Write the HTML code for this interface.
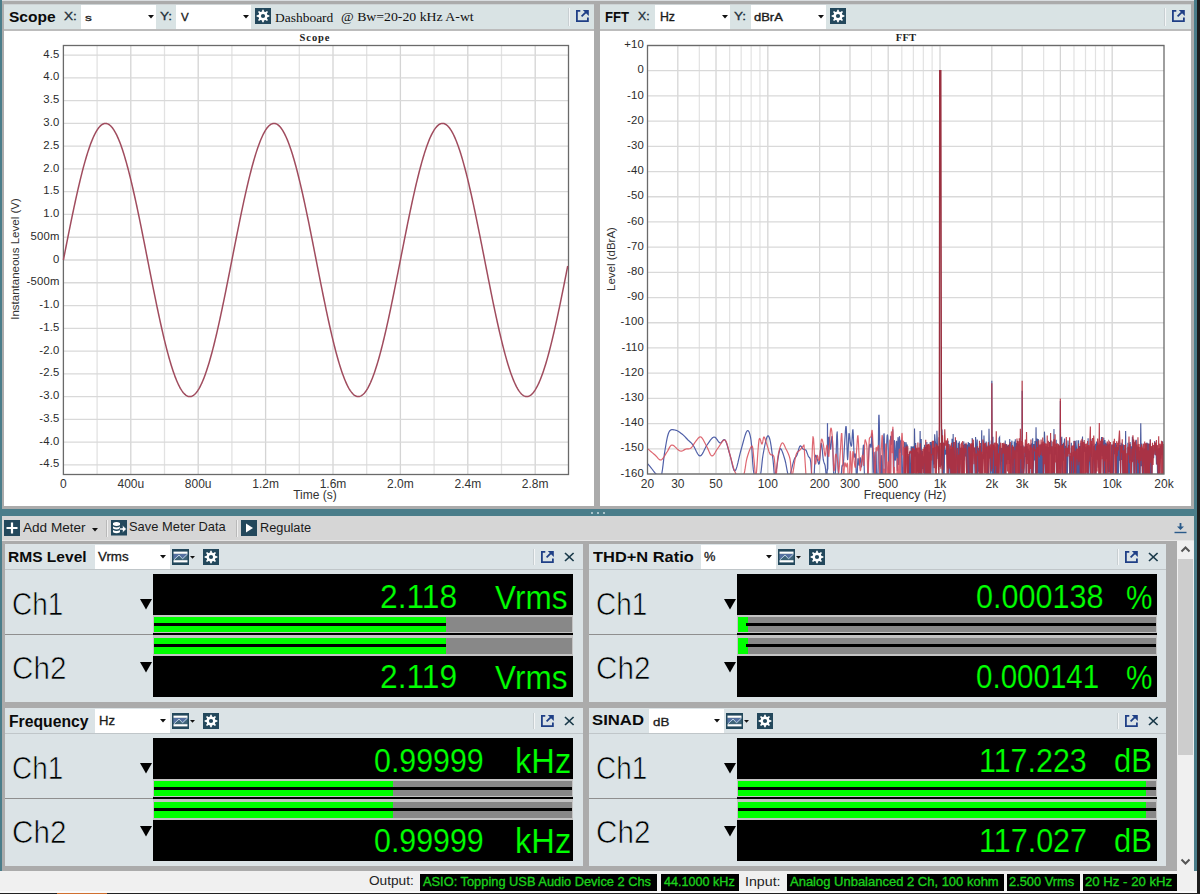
<!DOCTYPE html><html><head><meta charset="utf-8"><style>html,body{margin:0;padding:0;}body{width:1200px;height:894px;position:relative;overflow:hidden;background:#ababab;font-family:"Liberation Sans",sans-serif;}</style></head><body>
<div style="position:absolute;left:0px;top:0px;width:1200px;height:894px;background:#ababab;"></div>
<div style="position:absolute;left:2px;top:0px;width:1192px;height:1px;background:#d9dde0;"></div>
<div style="position:absolute;left:0px;top:0px;width:2px;height:871px;background:#4a7d8a;"></div>
<div style="position:absolute;left:1194px;top:0px;width:3px;height:871px;background:#4a7d8a;"></div>
<div style="position:absolute;left:1197px;top:0px;width:3px;height:894px;background:#1c1c1c;"></div>
<div style="position:absolute;left:4px;top:4px;width:590px;height:1px;background:#cdd3d5;"></div>
<div style="position:absolute;left:4px;top:5px;width:590px;height:24px;background:#d9e3e4;"></div>
<div style="position:absolute;left:4px;top:29px;width:590px;height:2px;background:#bcbcbc;"></div>
<div style="position:absolute;left:4px;top:31px;width:590px;height:475px;background:#fff;"></div>
<div style="position:absolute;left:8.83px;top:9.19px;font-family:'Liberation Sans', sans-serif;font-size:15.07px;line-height:1;color:#0a0a0a;font-weight:bold;white-space:nowrap;transform-origin:0 0;transform:scaleX(1.0313);">Scope</div>
<div style="position:absolute;left:63.79px;top:10.59px;font-family:'Liberation Sans', sans-serif;font-size:11.30px;line-height:1;color:#1e2e38;font-weight:normal;white-space:nowrap;transform-origin:0 0;transform:scaleX(1.2083);-webkit-text-stroke:0.3px #1e2e38;">X:</div>
<div style="position:absolute;left:81px;top:5px;width:75px;height:24px;background:#fff;"></div>
<div style="position:absolute;left:84.99px;top:12.76px;font-family:'Liberation Sans', sans-serif;font-size:9.82px;line-height:1;color:#1a1a1a;font-weight:normal;white-space:nowrap;transform-origin:0 0;transform:scaleX(1.3857);-webkit-text-stroke:0.35px #1a1a1a;">s</div>
<svg style="position:absolute;left:148px;top:15px" width="6" height="4" viewBox="0 0 6 4"><path d="M0 0 H6 L3 3.5 Z" fill="#111"/></svg>
<div style="position:absolute;left:159.59px;top:10.59px;font-family:'Liberation Sans', sans-serif;font-size:11.30px;line-height:1;color:#1e2e38;font-weight:normal;white-space:nowrap;transform-origin:0 0;transform:scaleX(1.2063);-webkit-text-stroke:0.3px #1e2e38;">Y:</div>
<div style="position:absolute;left:176px;top:5px;width:75px;height:24px;background:#fff;"></div>
<div style="position:absolute;left:181.13px;top:11.54px;font-family:'Liberation Sans', sans-serif;font-size:11.59px;line-height:1;color:#1a1a1a;font-weight:normal;white-space:nowrap;transform-origin:0 0;transform:scaleX(0.9952);-webkit-text-stroke:0.35px #1a1a1a;">V</div>
<svg style="position:absolute;left:243px;top:15px" width="6" height="4" viewBox="0 0 6 4"><path d="M0 0 H6 L3 3.5 Z" fill="#111"/></svg>
<svg style="position:absolute;left:255px;top:8px" width="16" height="16" viewBox="0 0 16 16"><rect width="16" height="16" fill="#23485c"/><polygon points="6.28,3.84 7.10,3.39 7.22,1.65 8.78,1.65 8.90,3.39 9.72,3.84 10.63,4.10 11.94,2.96 13.04,4.06 11.90,5.37 12.16,6.28 12.61,7.10 14.35,7.22 14.35,8.78 12.61,8.90 12.16,9.72 11.90,10.63 13.04,11.94 11.94,13.04 10.63,11.90 9.72,12.16 8.90,12.61 8.78,14.35 7.22,14.35 7.10,12.61 6.28,12.16 5.37,11.90 4.06,13.04 2.96,11.94 4.10,10.63 3.84,9.72 3.39,8.90 1.65,8.78 1.65,7.22 3.39,7.10 3.84,6.28 4.10,5.37 2.96,4.06 4.06,2.96 5.37,4.10" fill="#fff"/><circle cx="8.0" cy="8.0" r="2.1" fill="#23485c"/></svg>
<div style="position:absolute;left:569px;top:8px;width:1px;height:18px;background:#f4f6f7;"></div>
<div style="position:absolute;left:568px;top:8px;width:1px;height:18px;background:#c8cfd2;"></div>
<svg style="position:absolute;left:575.5px;top:10.1px" width="13.0" height="12.0" viewBox="0 0 13 12"><path d="M4.3 0.9 H0.9 V11.1 H11.9 V7.6" fill="none" stroke="#1f3f86" stroke-width="1.8"/><path d="M5.6 6.4 L10.2 1.8" stroke="#1f3f86" stroke-width="1.8"/><path d="M6.8 0 H12.8 V6 Z" fill="#1f3f86"/></svg>
<div style="position:absolute;left:600px;top:4px;width:591px;height:1px;background:#cdd3d5;"></div>
<div style="position:absolute;left:600px;top:5px;width:591px;height:24px;background:#d9e3e4;"></div>
<div style="position:absolute;left:600px;top:29px;width:591px;height:2px;background:#bcbcbc;"></div>
<div style="position:absolute;left:600px;top:31px;width:591px;height:475px;background:#fff;"></div>
<div style="position:absolute;left:604.88px;top:9.19px;font-family:'Liberation Sans', sans-serif;font-size:15.07px;line-height:1;color:#0a0a0a;font-weight:bold;white-space:nowrap;transform-origin:0 0;transform:scaleX(0.8701);">FFT</div>
<div style="position:absolute;left:638.38px;top:10.59px;font-family:'Liberation Sans', sans-serif;font-size:11.30px;line-height:1;color:#1e2e38;font-weight:normal;white-space:nowrap;transform-origin:0 0;transform:scaleX(1.0788);-webkit-text-stroke:0.3px #1e2e38;">X:</div>
<div style="position:absolute;left:655px;top:5px;width:75px;height:24px;background:#fff;"></div>
<div style="position:absolute;left:659.82px;top:11.21px;font-family:'Liberation Sans', sans-serif;font-size:12.10px;line-height:1;color:#1a1a1a;font-weight:normal;white-space:nowrap;transform-origin:0 0;transform:scaleX(1.0159);-webkit-text-stroke:0.35px #1a1a1a;">Hz</div>
<svg style="position:absolute;left:722px;top:15px" width="6" height="4" viewBox="0 0 6 4"><path d="M0 0 H6 L3 3.5 Z" fill="#111"/></svg>
<div style="position:absolute;left:734.09px;top:10.59px;font-family:'Liberation Sans', sans-serif;font-size:11.30px;line-height:1;color:#1e2e38;font-weight:normal;white-space:nowrap;transform-origin:0 0;transform:scaleX(1.2063);-webkit-text-stroke:0.3px #1e2e38;">Y:</div>
<div style="position:absolute;left:751px;top:5px;width:75px;height:24px;background:#fff;"></div>
<div style="position:absolute;left:754.48px;top:11.80px;font-family:'Liberation Sans', sans-serif;font-size:11.28px;line-height:1;color:#1a1a1a;font-weight:normal;white-space:nowrap;transform-origin:0 0;transform:scaleX(1.1505);-webkit-text-stroke:0.35px #1a1a1a;">dBrA</div>
<svg style="position:absolute;left:818px;top:15px" width="6" height="4" viewBox="0 0 6 4"><path d="M0 0 H6 L3 3.5 Z" fill="#111"/></svg>
<svg style="position:absolute;left:830px;top:8px" width="16" height="16" viewBox="0 0 16 16"><rect width="16" height="16" fill="#23485c"/><polygon points="6.28,3.84 7.10,3.39 7.22,1.65 8.78,1.65 8.90,3.39 9.72,3.84 10.63,4.10 11.94,2.96 13.04,4.06 11.90,5.37 12.16,6.28 12.61,7.10 14.35,7.22 14.35,8.78 12.61,8.90 12.16,9.72 11.90,10.63 13.04,11.94 11.94,13.04 10.63,11.90 9.72,12.16 8.90,12.61 8.78,14.35 7.22,14.35 7.10,12.61 6.28,12.16 5.37,11.90 4.06,13.04 2.96,11.94 4.10,10.63 3.84,9.72 3.39,8.90 1.65,8.78 1.65,7.22 3.39,7.10 3.84,6.28 4.10,5.37 2.96,4.06 4.06,2.96 5.37,4.10" fill="#fff"/><circle cx="8.0" cy="8.0" r="2.1" fill="#23485c"/></svg>
<div style="position:absolute;left:1165px;top:8px;width:1px;height:18px;background:#f4f6f7;"></div>
<div style="position:absolute;left:1164px;top:8px;width:1px;height:18px;background:#c8cfd2;"></div>
<svg style="position:absolute;left:1171.8px;top:10.1px" width="13.0" height="12.0" viewBox="0 0 13 12"><path d="M4.3 0.9 H0.9 V11.1 H11.9 V7.6" fill="none" stroke="#1f3f86" stroke-width="1.8"/><path d="M5.6 6.4 L10.2 1.8" stroke="#1f3f86" stroke-width="1.8"/><path d="M6.8 0 H12.8 V6 Z" fill="#1f3f86"/></svg>
<div style="position:absolute;left:274.85px;top:11.92px;font-family:'Liberation Serif', serif;font-size:12.00px;line-height:1;color:#111;font-weight:normal;white-space:nowrap;transform-origin:0 0;transform:scaleX(1.1218);">Dashboard</div>
<div style="position:absolute;left:341.06px;top:11.27px;font-family:'Liberation Serif', serif;font-size:12.92px;line-height:1;color:#111;font-weight:normal;white-space:nowrap;transform-origin:0 0;transform:scaleX(1.0685);">@ Bw=20-20 kHz A-wt</div>
<div style="position:absolute;left:2px;top:506px;width:1192px;height:4px;background:#ababab;"></div>
<div style="position:absolute;left:2px;top:509px;width:1192px;height:7px;background:#4a7d8a;"></div>
<div style="position:absolute;left:590.5px;top:512px;width:2px;height:2px;background:#a9c3ca;"></div>
<div style="position:absolute;left:596.7px;top:512px;width:2px;height:2px;background:#a9c3ca;"></div>
<div style="position:absolute;left:603.3px;top:512px;width:2px;height:2px;background:#a9c3ca;"></div>
<div style="position:absolute;left:2px;top:516px;width:1192px;height:25px;background:#d6d6d6;"></div>
<div style="position:absolute;left:2px;top:540px;width:1192px;height:1px;background:#e6e6e6;"></div>
<svg style="position:absolute;left:4px;top:520px" width="16" height="16" viewBox="0 0 16 16"><rect width="16" height="16" fill="#23485c"/><path d="M8 2.5 V13.5 M2.5 8 H13.5" stroke="#fff" stroke-width="2.2"/></svg>
<div style="position:absolute;left:23.30px;top:520.98px;font-family:'Liberation Sans', sans-serif;font-size:13.26px;line-height:1;color:#1a1a1a;font-weight:normal;white-space:nowrap;transform-origin:0 0;transform:scaleX(1.0246);">Add Meter</div>
<svg style="position:absolute;left:92px;top:528px" width="6" height="4" viewBox="0 0 6 4"><path d="M0 0 H6 L3 3.5 Z" fill="#111"/></svg>
<div style="position:absolute;left:106px;top:520px;width:1px;height:17px;background:#b9b9b9;"></div>
<div style="position:absolute;left:107px;top:520px;width:1px;height:17px;background:#f0f0f0;"></div>
<svg style="position:absolute;left:110.8px;top:520.2px" width="16" height="15.5" viewBox="0 0 16 15.5"><rect width="16" height="15.5" fill="#23485c"/><path d="M2 3 Q5.5 0.8 9 3 V5 Q5.5 7 2 5 Z M2 6.4 Q5.5 8.4 9 6.4 V8.6 Q5.5 10.6 2 8.6 Z M2 10 Q5.5 12 9 10 V12.2 Q5.5 14.2 2 12.2 Z" fill="#fff"/><path d="M8.5 8 H11.5 V5.2 L15.5 9 L11.5 12.8 V10 H8.5 Z" fill="#fff" stroke="#23485c" stroke-width="0.6"/></svg>
<div style="position:absolute;left:129.06px;top:521.36px;font-family:'Liberation Sans', sans-serif;font-size:12.96px;line-height:1;color:#1a1a1a;font-weight:normal;white-space:nowrap;transform-origin:0 0;transform:scaleX(0.9955);">Save Meter Data</div>
<div style="position:absolute;left:236px;top:520px;width:1px;height:17px;background:#b9b9b9;"></div>
<div style="position:absolute;left:237px;top:520px;width:1px;height:17px;background:#f0f0f0;"></div>
<svg style="position:absolute;left:241px;top:520px" width="16" height="16" viewBox="0 0 16 16"><rect width="16" height="16" fill="#23485c"/><path d="M5 3.5 L12 8 L5 12.5 Z" fill="#fff"/></svg>
<div style="position:absolute;left:260.28px;top:521.14px;font-family:'Liberation Sans', sans-serif;font-size:13.53px;line-height:1;color:#1a1a1a;font-weight:normal;white-space:nowrap;transform-origin:0 0;transform:scaleX(0.9430);">Regulate</div>
<svg style="position:absolute;left:1173px;top:522px" width="15" height="12" viewBox="0 0 15 12"><path d="M7.5 1 V5" stroke="#2a5a8a" stroke-width="1.8"/><path d="M4 4.5 H11 L7.5 8 Z" fill="#2a5a8a"/><path d="M1.5 10.5 H13.5" stroke="#2a5a8a" stroke-width="1.4"/></svg>
<div style="position:absolute;left:2px;top:541px;width:1175px;height:330px;background:#ababab;"></div>
<div style="position:absolute;left:1177px;top:541px;width:17px;height:330px;background:#f0f0f0;"></div>
<div style="position:absolute;left:1178px;top:559px;width:15px;height:196px;background:#cdcdcd;"></div>
<svg style="position:absolute;left:1180px;top:545px" width="11" height="8" viewBox="0 0 11 8"><path d="M1.5 6.5 L5.5 2.5 L9.5 6.5" fill="none" stroke="#555" stroke-width="2"/></svg>
<svg style="position:absolute;left:1180px;top:858px" width="11" height="8" viewBox="0 0 11 8"><path d="M1.5 1.5 L5.5 5.5 L9.5 1.5" fill="none" stroke="#555" stroke-width="2"/></svg>
<div style="position:absolute;left:5px;top:544px;width:578px;height:158px;background:#dbe3e6;"></div>
<div style="position:absolute;left:5px;top:569px;width:578px;height:1px;background:#c0c6c9;"></div>
<div style="position:absolute;left:8.41px;top:549.91px;font-family:'Liberation Sans', sans-serif;font-size:14.05px;line-height:1;color:#0a0a0a;font-weight:bold;white-space:nowrap;transform-origin:0 0;transform:scaleX(1.1064);">RMS Level</div>
<div style="position:absolute;left:95px;top:545px;width:75px;height:24px;background:#fff;"></div>
<div style="position:absolute;left:97.87px;top:551.03px;font-family:'Liberation Sans', sans-serif;font-size:12.29px;line-height:1;color:#1a1a1a;font-weight:normal;white-space:nowrap;transform-origin:0 0;transform:scaleX(1.0853);-webkit-text-stroke:0.3px #1a1a1a;">Vrms</div>
<svg style="position:absolute;left:160px;top:555px" width="6" height="4" viewBox="0 0 6 4"><path d="M0 0 H6 L3 3.5 Z" fill="#111"/></svg>
<svg style="position:absolute;left:172px;top:549px" width="24" height="16" viewBox="0 0 24 16"><rect x="0" y="0" width="17" height="16" fill="#23485c"/><rect x="1.5" y="5" width="14" height="6.5" fill="#3f6478"/><path d="M1.5 5 H15.5 V6 L11 10 L8 7 L1.5 10.5 Z" fill="#5570a0"/><rect x="1.5" y="2.6" width="14" height="2.2" fill="#fff"/><rect x="1.5" y="11.2" width="14" height="2.2" fill="#fff"/><polyline points="2,10.8 7,6 10.5,9.8 15.5,5" fill="none" stroke="#b8d0dc" stroke-width="1"/><path d="M18 7 L23 7 L20.5 9.8 Z" fill="#111"/></svg>
<svg style="position:absolute;left:203px;top:549px" width="16" height="16" viewBox="0 0 16 16"><rect width="16" height="16" fill="#23485c"/><polygon points="6.28,3.84 7.10,3.39 7.22,1.65 8.78,1.65 8.90,3.39 9.72,3.84 10.63,4.10 11.94,2.96 13.04,4.06 11.90,5.37 12.16,6.28 12.61,7.10 14.35,7.22 14.35,8.78 12.61,8.90 12.16,9.72 11.90,10.63 13.04,11.94 11.94,13.04 10.63,11.90 9.72,12.16 8.90,12.61 8.78,14.35 7.22,14.35 7.10,12.61 6.28,12.16 5.37,11.90 4.06,13.04 2.96,11.94 4.10,10.63 3.84,9.72 3.39,8.90 1.65,8.78 1.65,7.22 3.39,7.10 3.84,6.28 4.10,5.37 2.96,4.06 4.06,2.96 5.37,4.10" fill="#fff"/><circle cx="8.0" cy="8.0" r="2.1" fill="#23485c"/></svg>
<svg style="position:absolute;left:540.5px;top:550.8px" width="13.0" height="12.0" viewBox="0 0 13 12"><path d="M4.3 0.9 H0.9 V11.1 H11.9 V7.6" fill="none" stroke="#1f3f86" stroke-width="1.8"/><path d="M5.6 6.4 L10.2 1.8" stroke="#1f3f86" stroke-width="1.8"/><path d="M6.8 0 H12.8 V6 Z" fill="#1f3f86"/></svg>
<svg style="position:absolute;left:564.4px;top:551.5px" width="11" height="10" viewBox="0 0 11 10"><path d="M1 1 L9.6 9 M9.6 1 L1 9" stroke="#1a3a4a" stroke-width="1.7"/></svg>
<div style="position:absolute;left:533px;top:549px;width:1px;height:16px;background:#c8cfd2;"></div>
<div style="position:absolute;left:534px;top:549px;width:1px;height:16px;background:#f4f6f7;"></div>
<div style="position:absolute;left:153px;top:574px;width:420px;height:123px;background:#000;"></div>
<div style="position:absolute;left:5px;top:634px;width:148px;height:1px;background:#8f8f8f;"></div>
<div style="position:absolute;left:12.30px;top:588.89px;font-family:'Liberation Sans', sans-serif;font-size:31.76px;line-height:1;color:#000;font-weight:normal;white-space:nowrap;transform-origin:0 0;transform:scaleX(0.8792);-webkit-text-stroke:0.7px #dbe3e6;">Ch1</div>
<div style="position:absolute;left:12.22px;top:652.69px;font-family:'Liberation Sans', sans-serif;font-size:31.76px;line-height:1;color:#000;font-weight:normal;white-space:nowrap;transform-origin:0 0;transform:scaleX(0.9338);-webkit-text-stroke:0.7px #dbe3e6;">Ch2</div>
<svg style="position:absolute;left:140px;top:599px" width="12" height="11" viewBox="0 0 12 11"><path d="M0 0 H12 L6 10.5 Z" fill="#000"/></svg>
<svg style="position:absolute;left:140px;top:662px" width="12" height="11" viewBox="0 0 12 11"><path d="M0 0 H12 L6 10.5 Z" fill="#000"/></svg>
<div style="position:absolute;left:153px;top:615px;width:420px;height:18px;background:#c4c4c4;"></div>
<div style="position:absolute;left:154px;top:617px;width:418px;height:15px;background:#888;"></div>
<div style="position:absolute;left:154px;top:617px;width:292px;height:6px;background:#00ff00;"></div>
<div style="position:absolute;left:154px;top:623px;width:292px;height:3px;background:#000;"></div>
<div style="position:absolute;left:154px;top:626px;width:292px;height:6px;background:#00ff00;"></div>
<div style="position:absolute;left:153px;top:635px;width:420px;height:21px;background:#c4c4c4;"></div>
<div style="position:absolute;left:154px;top:638px;width:418px;height:16px;background:#888;"></div>
<div style="position:absolute;left:154px;top:638px;width:292px;height:6px;background:#00ff00;"></div>
<div style="position:absolute;left:154px;top:644px;width:292px;height:3px;background:#000;"></div>
<div style="position:absolute;left:154px;top:647px;width:292px;height:7px;background:#00ff00;"></div>
<div style="position:absolute;left:153px;top:633px;width:420px;height:2px;background:#000;"></div>
<div style="position:absolute;left:380.41px;top:581.12px;font-family:'Liberation Sans', sans-serif;font-size:32.54px;line-height:1;color:#00ff00;font-weight:normal;white-space:nowrap;transform-origin:0 0;transform:scaleX(0.9762);-webkit-text-stroke:0.2px #000;">2.118</div>
<div style="position:absolute;left:494.68px;top:580.72px;font-family:'Liberation Sans', sans-serif;font-size:33.00px;line-height:1;color:#00ff00;font-weight:normal;white-space:nowrap;transform-origin:0 0;transform:scaleX(0.9562);-webkit-text-stroke:0.2px #000;">Vrms</div>
<div style="position:absolute;left:380.41px;top:661.12px;font-family:'Liberation Sans', sans-serif;font-size:32.54px;line-height:1;color:#00ff00;font-weight:normal;white-space:nowrap;transform-origin:0 0;transform:scaleX(0.9762);-webkit-text-stroke:0.2px #000;">2.119</div>
<div style="position:absolute;left:494.68px;top:660.72px;font-family:'Liberation Sans', sans-serif;font-size:33.00px;line-height:1;color:#00ff00;font-weight:normal;white-space:nowrap;transform-origin:0 0;transform:scaleX(0.9562);-webkit-text-stroke:0.2px #000;">Vrms</div>
<div style="position:absolute;left:589px;top:544px;width:577px;height:158px;background:#dbe3e6;"></div>
<div style="position:absolute;left:589px;top:569px;width:577px;height:1px;background:#c0c6c9;"></div>
<div style="position:absolute;left:593.14px;top:549.91px;font-family:'Liberation Sans', sans-serif;font-size:14.05px;line-height:1;color:#0a0a0a;font-weight:bold;white-space:nowrap;transform-origin:0 0;transform:scaleX(1.1684);">THD+N Ratio</div>
<div style="position:absolute;left:701px;top:545px;width:75px;height:24px;background:#fff;"></div>
<div style="position:absolute;left:704.29px;top:551.03px;font-family:'Liberation Sans', sans-serif;font-size:12.29px;line-height:1;color:#1a1a1a;font-weight:normal;white-space:nowrap;transform-origin:0 0;transform:scaleX(1.0451);-webkit-text-stroke:0.3px #1a1a1a;">%</div>
<svg style="position:absolute;left:766px;top:555px" width="6" height="4" viewBox="0 0 6 4"><path d="M0 0 H6 L3 3.5 Z" fill="#111"/></svg>
<svg style="position:absolute;left:778px;top:549px" width="24" height="16" viewBox="0 0 24 16"><rect x="0" y="0" width="17" height="16" fill="#23485c"/><rect x="1.5" y="5" width="14" height="6.5" fill="#3f6478"/><path d="M1.5 5 H15.5 V6 L11 10 L8 7 L1.5 10.5 Z" fill="#5570a0"/><rect x="1.5" y="2.6" width="14" height="2.2" fill="#fff"/><rect x="1.5" y="11.2" width="14" height="2.2" fill="#fff"/><polyline points="2,10.8 7,6 10.5,9.8 15.5,5" fill="none" stroke="#b8d0dc" stroke-width="1"/><path d="M18 7 L23 7 L20.5 9.8 Z" fill="#111"/></svg>
<svg style="position:absolute;left:809px;top:549px" width="16" height="16" viewBox="0 0 16 16"><rect width="16" height="16" fill="#23485c"/><polygon points="6.28,3.84 7.10,3.39 7.22,1.65 8.78,1.65 8.90,3.39 9.72,3.84 10.63,4.10 11.94,2.96 13.04,4.06 11.90,5.37 12.16,6.28 12.61,7.10 14.35,7.22 14.35,8.78 12.61,8.90 12.16,9.72 11.90,10.63 13.04,11.94 11.94,13.04 10.63,11.90 9.72,12.16 8.90,12.61 8.78,14.35 7.22,14.35 7.10,12.61 6.28,12.16 5.37,11.90 4.06,13.04 2.96,11.94 4.10,10.63 3.84,9.72 3.39,8.90 1.65,8.78 1.65,7.22 3.39,7.10 3.84,6.28 4.10,5.37 2.96,4.06 4.06,2.96 5.37,4.10" fill="#fff"/><circle cx="8.0" cy="8.0" r="2.1" fill="#23485c"/></svg>
<svg style="position:absolute;left:1124.5px;top:550.8px" width="13.0" height="12.0" viewBox="0 0 13 12"><path d="M4.3 0.9 H0.9 V11.1 H11.9 V7.6" fill="none" stroke="#1f3f86" stroke-width="1.8"/><path d="M5.6 6.4 L10.2 1.8" stroke="#1f3f86" stroke-width="1.8"/><path d="M6.8 0 H12.8 V6 Z" fill="#1f3f86"/></svg>
<svg style="position:absolute;left:1148.4px;top:551.5px" width="11" height="10" viewBox="0 0 11 10"><path d="M1 1 L9.6 9 M9.6 1 L1 9" stroke="#1a3a4a" stroke-width="1.7"/></svg>
<div style="position:absolute;left:1117px;top:549px;width:1px;height:16px;background:#c8cfd2;"></div>
<div style="position:absolute;left:1118px;top:549px;width:1px;height:16px;background:#f4f6f7;"></div>
<div style="position:absolute;left:737px;top:574px;width:420px;height:123px;background:#000;"></div>
<div style="position:absolute;left:589px;top:634px;width:148px;height:1px;background:#8f8f8f;"></div>
<div style="position:absolute;left:596.30px;top:588.89px;font-family:'Liberation Sans', sans-serif;font-size:31.76px;line-height:1;color:#000;font-weight:normal;white-space:nowrap;transform-origin:0 0;transform:scaleX(0.8792);-webkit-text-stroke:0.7px #dbe3e6;">Ch1</div>
<div style="position:absolute;left:596.22px;top:652.69px;font-family:'Liberation Sans', sans-serif;font-size:31.76px;line-height:1;color:#000;font-weight:normal;white-space:nowrap;transform-origin:0 0;transform:scaleX(0.9338);-webkit-text-stroke:0.7px #dbe3e6;">Ch2</div>
<svg style="position:absolute;left:724px;top:599px" width="12" height="11" viewBox="0 0 12 11"><path d="M0 0 H12 L6 10.5 Z" fill="#000"/></svg>
<svg style="position:absolute;left:724px;top:662px" width="12" height="11" viewBox="0 0 12 11"><path d="M0 0 H12 L6 10.5 Z" fill="#000"/></svg>
<div style="position:absolute;left:737px;top:615px;width:420px;height:18px;background:#c4c4c4;"></div>
<div style="position:absolute;left:738px;top:617px;width:418px;height:15px;background:#888;"></div>
<div style="position:absolute;left:738px;top:617px;width:10px;height:6px;background:#00ff00;"></div>
<div style="position:absolute;left:738px;top:623px;width:10px;height:3px;background:#00ff00;"></div>
<div style="position:absolute;left:745.5px;top:623px;width:410.5px;height:3px;background:#000;"></div>
<div style="position:absolute;left:738px;top:626px;width:10px;height:6px;background:#00ff00;"></div>
<div style="position:absolute;left:737px;top:635px;width:420px;height:21px;background:#c4c4c4;"></div>
<div style="position:absolute;left:738px;top:638px;width:418px;height:16px;background:#888;"></div>
<div style="position:absolute;left:738px;top:638px;width:10px;height:6px;background:#00ff00;"></div>
<div style="position:absolute;left:738px;top:644px;width:10px;height:3px;background:#00ff00;"></div>
<div style="position:absolute;left:745.5px;top:644px;width:410.5px;height:3px;background:#000;"></div>
<div style="position:absolute;left:738px;top:647px;width:10px;height:7px;background:#00ff00;"></div>
<div style="position:absolute;left:737px;top:633px;width:420px;height:2px;background:#000;"></div>
<div style="position:absolute;left:976.28px;top:581.12px;font-family:'Liberation Sans', sans-serif;font-size:32.54px;line-height:1;color:#00ff00;font-weight:normal;white-space:nowrap;transform-origin:0 0;transform:scaleX(0.9394);-webkit-text-stroke:0.2px #000;">0.000138</div>
<div style="position:absolute;left:1125.51px;top:580.72px;font-family:'Liberation Sans', sans-serif;font-size:33.00px;line-height:1;color:#00ff00;font-weight:normal;white-space:nowrap;transform-origin:0 0;transform:scaleX(0.9016);-webkit-text-stroke:0.2px #000;">%</div>
<div style="position:absolute;left:976.32px;top:661.12px;font-family:'Liberation Sans', sans-serif;font-size:32.54px;line-height:1;color:#00ff00;font-weight:normal;white-space:nowrap;transform-origin:0 0;transform:scaleX(0.9078);-webkit-text-stroke:0.2px #000;">0.000141</div>
<div style="position:absolute;left:1125.51px;top:660.72px;font-family:'Liberation Sans', sans-serif;font-size:33.00px;line-height:1;color:#00ff00;font-weight:normal;white-space:nowrap;transform-origin:0 0;transform:scaleX(0.9016);-webkit-text-stroke:0.2px #000;">%</div>
<div style="position:absolute;left:5px;top:708px;width:578px;height:158px;background:#dbe3e6;"></div>
<div style="position:absolute;left:5px;top:733px;width:578px;height:1px;background:#c0c6c9;"></div>
<div style="position:absolute;left:8.80px;top:712.80px;font-family:'Liberation Sans', sans-serif;font-size:16.22px;line-height:1;color:#0a0a0a;font-weight:bold;white-space:nowrap;transform-origin:0 0;transform:scaleX(0.9705);">Frequency</div>
<div style="position:absolute;left:95px;top:709px;width:75px;height:24px;background:#fff;"></div>
<div style="position:absolute;left:98.65px;top:715.01px;font-family:'Liberation Sans', sans-serif;font-size:12.46px;line-height:1;color:#1a1a1a;font-weight:normal;white-space:nowrap;transform-origin:0 0;transform:scaleX(1.0526);-webkit-text-stroke:0.3px #1a1a1a;">Hz</div>
<svg style="position:absolute;left:160px;top:719px" width="6" height="4" viewBox="0 0 6 4"><path d="M0 0 H6 L3 3.5 Z" fill="#111"/></svg>
<svg style="position:absolute;left:172px;top:713px" width="24" height="16" viewBox="0 0 24 16"><rect x="0" y="0" width="17" height="16" fill="#23485c"/><rect x="1.5" y="5" width="14" height="6.5" fill="#3f6478"/><path d="M1.5 5 H15.5 V6 L11 10 L8 7 L1.5 10.5 Z" fill="#5570a0"/><rect x="1.5" y="2.6" width="14" height="2.2" fill="#fff"/><rect x="1.5" y="11.2" width="14" height="2.2" fill="#fff"/><polyline points="2,10.8 7,6 10.5,9.8 15.5,5" fill="none" stroke="#b8d0dc" stroke-width="1"/><path d="M18 7 L23 7 L20.5 9.8 Z" fill="#111"/></svg>
<svg style="position:absolute;left:203px;top:713px" width="16" height="16" viewBox="0 0 16 16"><rect width="16" height="16" fill="#23485c"/><polygon points="6.28,3.84 7.10,3.39 7.22,1.65 8.78,1.65 8.90,3.39 9.72,3.84 10.63,4.10 11.94,2.96 13.04,4.06 11.90,5.37 12.16,6.28 12.61,7.10 14.35,7.22 14.35,8.78 12.61,8.90 12.16,9.72 11.90,10.63 13.04,11.94 11.94,13.04 10.63,11.90 9.72,12.16 8.90,12.61 8.78,14.35 7.22,14.35 7.10,12.61 6.28,12.16 5.37,11.90 4.06,13.04 2.96,11.94 4.10,10.63 3.84,9.72 3.39,8.90 1.65,8.78 1.65,7.22 3.39,7.10 3.84,6.28 4.10,5.37 2.96,4.06 4.06,2.96 5.37,4.10" fill="#fff"/><circle cx="8.0" cy="8.0" r="2.1" fill="#23485c"/></svg>
<svg style="position:absolute;left:540.5px;top:714.8px" width="13.0" height="12.0" viewBox="0 0 13 12"><path d="M4.3 0.9 H0.9 V11.1 H11.9 V7.6" fill="none" stroke="#1f3f86" stroke-width="1.8"/><path d="M5.6 6.4 L10.2 1.8" stroke="#1f3f86" stroke-width="1.8"/><path d="M6.8 0 H12.8 V6 Z" fill="#1f3f86"/></svg>
<svg style="position:absolute;left:564.4px;top:715.5px" width="11" height="10" viewBox="0 0 11 10"><path d="M1 1 L9.6 9 M9.6 1 L1 9" stroke="#1a3a4a" stroke-width="1.7"/></svg>
<div style="position:absolute;left:533px;top:713px;width:1px;height:16px;background:#c8cfd2;"></div>
<div style="position:absolute;left:534px;top:713px;width:1px;height:16px;background:#f4f6f7;"></div>
<div style="position:absolute;left:153px;top:738px;width:420px;height:123px;background:#000;"></div>
<div style="position:absolute;left:5px;top:798px;width:148px;height:1px;background:#8f8f8f;"></div>
<div style="position:absolute;left:12.30px;top:752.89px;font-family:'Liberation Sans', sans-serif;font-size:31.76px;line-height:1;color:#000;font-weight:normal;white-space:nowrap;transform-origin:0 0;transform:scaleX(0.8792);-webkit-text-stroke:0.7px #dbe3e6;">Ch1</div>
<div style="position:absolute;left:12.22px;top:816.69px;font-family:'Liberation Sans', sans-serif;font-size:31.76px;line-height:1;color:#000;font-weight:normal;white-space:nowrap;transform-origin:0 0;transform:scaleX(0.9338);-webkit-text-stroke:0.7px #dbe3e6;">Ch2</div>
<svg style="position:absolute;left:140px;top:763px" width="12" height="11" viewBox="0 0 12 11"><path d="M0 0 H12 L6 10.5 Z" fill="#000"/></svg>
<svg style="position:absolute;left:140px;top:826px" width="12" height="11" viewBox="0 0 12 11"><path d="M0 0 H12 L6 10.5 Z" fill="#000"/></svg>
<div style="position:absolute;left:153px;top:779px;width:420px;height:18px;background:#c4c4c4;"></div>
<div style="position:absolute;left:154px;top:781px;width:418px;height:15px;background:#888;"></div>
<div style="position:absolute;left:154px;top:781px;width:239px;height:6px;background:#00ff00;"></div>
<div style="position:absolute;left:154px;top:787px;width:239px;height:3px;background:#000;"></div>
<div style="position:absolute;left:393px;top:787px;width:179px;height:3px;background:#000;"></div>
<div style="position:absolute;left:154px;top:790px;width:239px;height:6px;background:#00ff00;"></div>
<div style="position:absolute;left:153px;top:799px;width:420px;height:21px;background:#c4c4c4;"></div>
<div style="position:absolute;left:154px;top:802px;width:418px;height:16px;background:#888;"></div>
<div style="position:absolute;left:154px;top:802px;width:239px;height:6px;background:#00ff00;"></div>
<div style="position:absolute;left:154px;top:808px;width:239px;height:3px;background:#000;"></div>
<div style="position:absolute;left:393px;top:808px;width:179px;height:3px;background:#000;"></div>
<div style="position:absolute;left:154px;top:811px;width:239px;height:7px;background:#00ff00;"></div>
<div style="position:absolute;left:153px;top:797px;width:420px;height:2px;background:#000;"></div>
<div style="position:absolute;left:374.39px;top:745.12px;font-family:'Liberation Sans', sans-serif;font-size:32.54px;line-height:1;color:#00ff00;font-weight:normal;white-space:nowrap;transform-origin:0 0;transform:scaleX(0.9334);-webkit-text-stroke:0.2px #000;">0.99999</div>
<div style="position:absolute;left:514.52px;top:743.99px;font-family:'Liberation Sans', sans-serif;font-size:34.25px;line-height:1;color:#00ff00;font-weight:normal;white-space:nowrap;transform-origin:0 0;transform:scaleX(0.9526);-webkit-text-stroke:0.2px #000;">kHz</div>
<div style="position:absolute;left:374.39px;top:825.12px;font-family:'Liberation Sans', sans-serif;font-size:32.54px;line-height:1;color:#00ff00;font-weight:normal;white-space:nowrap;transform-origin:0 0;transform:scaleX(0.9334);-webkit-text-stroke:0.2px #000;">0.99999</div>
<div style="position:absolute;left:514.52px;top:823.99px;font-family:'Liberation Sans', sans-serif;font-size:34.25px;line-height:1;color:#00ff00;font-weight:normal;white-space:nowrap;transform-origin:0 0;transform:scaleX(0.9526);-webkit-text-stroke:0.2px #000;">kHz</div>
<div style="position:absolute;left:589px;top:708px;width:577px;height:158px;background:#dbe3e6;"></div>
<div style="position:absolute;left:589px;top:733px;width:577px;height:1px;background:#c0c6c9;"></div>
<div style="position:absolute;left:591.50px;top:713.40px;font-family:'Liberation Sans', sans-serif;font-size:14.65px;line-height:1;color:#0a0a0a;font-weight:bold;white-space:nowrap;transform-origin:0 0;transform:scaleX(1.1408);">SINAD</div>
<div style="position:absolute;left:649px;top:709px;width:75px;height:24px;background:#fff;"></div>
<div style="position:absolute;left:653.17px;top:715.61px;font-family:'Liberation Sans', sans-serif;font-size:11.62px;line-height:1;color:#1a1a1a;font-weight:normal;white-space:nowrap;transform-origin:0 0;transform:scaleX(1.1498);-webkit-text-stroke:0.3px #1a1a1a;">dB</div>
<svg style="position:absolute;left:714px;top:719px" width="6" height="4" viewBox="0 0 6 4"><path d="M0 0 H6 L3 3.5 Z" fill="#111"/></svg>
<svg style="position:absolute;left:726px;top:713px" width="24" height="16" viewBox="0 0 24 16"><rect x="0" y="0" width="17" height="16" fill="#23485c"/><rect x="1.5" y="5" width="14" height="6.5" fill="#3f6478"/><path d="M1.5 5 H15.5 V6 L11 10 L8 7 L1.5 10.5 Z" fill="#5570a0"/><rect x="1.5" y="2.6" width="14" height="2.2" fill="#fff"/><rect x="1.5" y="11.2" width="14" height="2.2" fill="#fff"/><polyline points="2,10.8 7,6 10.5,9.8 15.5,5" fill="none" stroke="#b8d0dc" stroke-width="1"/><path d="M18 7 L23 7 L20.5 9.8 Z" fill="#111"/></svg>
<svg style="position:absolute;left:757px;top:713px" width="16" height="16" viewBox="0 0 16 16"><rect width="16" height="16" fill="#23485c"/><polygon points="6.28,3.84 7.10,3.39 7.22,1.65 8.78,1.65 8.90,3.39 9.72,3.84 10.63,4.10 11.94,2.96 13.04,4.06 11.90,5.37 12.16,6.28 12.61,7.10 14.35,7.22 14.35,8.78 12.61,8.90 12.16,9.72 11.90,10.63 13.04,11.94 11.94,13.04 10.63,11.90 9.72,12.16 8.90,12.61 8.78,14.35 7.22,14.35 7.10,12.61 6.28,12.16 5.37,11.90 4.06,13.04 2.96,11.94 4.10,10.63 3.84,9.72 3.39,8.90 1.65,8.78 1.65,7.22 3.39,7.10 3.84,6.28 4.10,5.37 2.96,4.06 4.06,2.96 5.37,4.10" fill="#fff"/><circle cx="8.0" cy="8.0" r="2.1" fill="#23485c"/></svg>
<svg style="position:absolute;left:1124.5px;top:714.8px" width="13.0" height="12.0" viewBox="0 0 13 12"><path d="M4.3 0.9 H0.9 V11.1 H11.9 V7.6" fill="none" stroke="#1f3f86" stroke-width="1.8"/><path d="M5.6 6.4 L10.2 1.8" stroke="#1f3f86" stroke-width="1.8"/><path d="M6.8 0 H12.8 V6 Z" fill="#1f3f86"/></svg>
<svg style="position:absolute;left:1148.4px;top:715.5px" width="11" height="10" viewBox="0 0 11 10"><path d="M1 1 L9.6 9 M9.6 1 L1 9" stroke="#1a3a4a" stroke-width="1.7"/></svg>
<div style="position:absolute;left:1117px;top:713px;width:1px;height:16px;background:#c8cfd2;"></div>
<div style="position:absolute;left:1118px;top:713px;width:1px;height:16px;background:#f4f6f7;"></div>
<div style="position:absolute;left:737px;top:738px;width:420px;height:123px;background:#000;"></div>
<div style="position:absolute;left:589px;top:798px;width:148px;height:1px;background:#8f8f8f;"></div>
<div style="position:absolute;left:596.30px;top:752.89px;font-family:'Liberation Sans', sans-serif;font-size:31.76px;line-height:1;color:#000;font-weight:normal;white-space:nowrap;transform-origin:0 0;transform:scaleX(0.8792);-webkit-text-stroke:0.7px #dbe3e6;">Ch1</div>
<div style="position:absolute;left:596.22px;top:816.69px;font-family:'Liberation Sans', sans-serif;font-size:31.76px;line-height:1;color:#000;font-weight:normal;white-space:nowrap;transform-origin:0 0;transform:scaleX(0.9338);-webkit-text-stroke:0.7px #dbe3e6;">Ch2</div>
<svg style="position:absolute;left:724px;top:763px" width="12" height="11" viewBox="0 0 12 11"><path d="M0 0 H12 L6 10.5 Z" fill="#000"/></svg>
<svg style="position:absolute;left:724px;top:826px" width="12" height="11" viewBox="0 0 12 11"><path d="M0 0 H12 L6 10.5 Z" fill="#000"/></svg>
<div style="position:absolute;left:737px;top:779px;width:420px;height:18px;background:#c4c4c4;"></div>
<div style="position:absolute;left:738px;top:781px;width:418px;height:15px;background:#888;"></div>
<div style="position:absolute;left:738px;top:781px;width:408px;height:6px;background:#00ff00;"></div>
<div style="position:absolute;left:738px;top:787px;width:408px;height:3px;background:#000;"></div>
<div style="position:absolute;left:1146px;top:787px;width:10px;height:3px;background:#000;"></div>
<div style="position:absolute;left:738px;top:790px;width:408px;height:6px;background:#00ff00;"></div>
<div style="position:absolute;left:737px;top:799px;width:420px;height:21px;background:#c4c4c4;"></div>
<div style="position:absolute;left:738px;top:802px;width:418px;height:16px;background:#888;"></div>
<div style="position:absolute;left:738px;top:802px;width:408px;height:6px;background:#00ff00;"></div>
<div style="position:absolute;left:738px;top:808px;width:408px;height:3px;background:#000;"></div>
<div style="position:absolute;left:1146px;top:808px;width:10px;height:3px;background:#000;"></div>
<div style="position:absolute;left:738px;top:811px;width:408px;height:7px;background:#00ff00;"></div>
<div style="position:absolute;left:737px;top:797px;width:420px;height:2px;background:#000;"></div>
<div style="position:absolute;left:979.26px;top:745.12px;font-family:'Liberation Sans', sans-serif;font-size:32.54px;line-height:1;color:#00ff00;font-weight:normal;white-space:nowrap;transform-origin:0 0;transform:scaleX(0.9356);-webkit-text-stroke:0.2px #000;">117.223</div>
<div style="position:absolute;left:1113.76px;top:744.05px;font-family:'Liberation Sans', sans-serif;font-size:33.78px;line-height:1;color:#00ff00;font-weight:normal;white-space:nowrap;transform-origin:0 0;transform:scaleX(0.9168);-webkit-text-stroke:0.2px #000;">dB</div>
<div style="position:absolute;left:979.26px;top:825.12px;font-family:'Liberation Sans', sans-serif;font-size:32.54px;line-height:1;color:#00ff00;font-weight:normal;white-space:nowrap;transform-origin:0 0;transform:scaleX(0.9383);-webkit-text-stroke:0.2px #000;">117.027</div>
<div style="position:absolute;left:1113.76px;top:824.05px;font-family:'Liberation Sans', sans-serif;font-size:33.78px;line-height:1;color:#00ff00;font-weight:normal;white-space:nowrap;transform-origin:0 0;transform:scaleX(0.9168);-webkit-text-stroke:0.2px #000;">dB</div>
<div style="position:absolute;left:0px;top:871px;width:1197px;height:20px;background:#f0f0f0;"></div>
<div style="position:absolute;left:0px;top:891px;width:1197px;height:2px;background:#fafafa;"></div>
<div style="position:absolute;left:0px;top:893px;width:1200px;height:1px;background:#222;"></div>
<div style="position:absolute;left:57px;top:893px;width:50px;height:1px;background:#d07030;"></div>
<div style="position:absolute;left:368.92px;top:875.17px;font-family:'Liberation Sans', sans-serif;font-size:12.89px;line-height:1;color:#222;font-weight:normal;white-space:nowrap;transform-origin:0 0;transform:scaleX(1.0601);">Output:</div>
<div style="position:absolute;left:420px;top:874px;width:237px;height:16.5px;background:#000;"></div>
<div style="position:absolute;left:423.30px;top:874.98px;font-family:'Liberation Sans', sans-serif;font-size:13.26px;line-height:1;color:#1cd01c;font-weight:normal;white-space:nowrap;transform-origin:0 0;transform:scaleX(0.9685);-webkit-text-stroke:0.35px #1cd01c;">ASIO: Topping USB Audio Device 2 Chs</div>
<div style="position:absolute;left:661px;top:874px;width:78px;height:16.5px;background:#000;"></div>
<div style="position:absolute;left:663.75px;top:874.98px;font-family:'Liberation Sans', sans-serif;font-size:13.26px;line-height:1;color:#1cd01c;font-weight:normal;white-space:nowrap;transform-origin:0 0;transform:scaleX(0.9511);-webkit-text-stroke:0.35px #1cd01c;">44.1000 kHz</div>
<div style="position:absolute;left:744.72px;top:874.98px;font-family:'Liberation Sans', sans-serif;font-size:13.26px;line-height:1;color:#222;font-weight:normal;white-space:nowrap;transform-origin:0 0;transform:scaleX(1.0726);">Input:</div>
<div style="position:absolute;left:787px;top:874px;width:217px;height:16.5px;background:#000;"></div>
<div style="position:absolute;left:790.00px;top:874.98px;font-family:'Liberation Sans', sans-serif;font-size:13.26px;line-height:1;color:#1cd01c;font-weight:normal;white-space:nowrap;transform-origin:0 0;transform:scaleX(0.9803);-webkit-text-stroke:0.35px #1cd01c;">Analog Unbalanced 2 Ch, 100 kohm</div>
<div style="position:absolute;left:1007px;top:874px;width:73px;height:16.5px;background:#000;"></div>
<div style="position:absolute;left:1009.36px;top:874.98px;font-family:'Liberation Sans', sans-serif;font-size:13.26px;line-height:1;color:#1cd01c;font-weight:normal;white-space:nowrap;transform-origin:0 0;transform:scaleX(0.9702);-webkit-text-stroke:0.35px #1cd01c;">2.500 Vrms</div>
<div style="position:absolute;left:1083px;top:874px;width:94px;height:16.5px;background:#000;"></div>
<div style="position:absolute;left:1085.14px;top:874.98px;font-family:'Liberation Sans', sans-serif;font-size:13.26px;line-height:1;color:#1cd01c;font-weight:normal;white-space:nowrap;transform-origin:0 0;transform:scaleX(0.9950);-webkit-text-stroke:0.35px #1cd01c;">20 Hz - 20 kHz</div>
<svg style="position:absolute;left:0;top:0" width="1200" height="894" viewBox="0 0 1200 894"><line x1="97.10" y1="45.5" x2="97.10" y2="474.5" stroke="#e2e2e2" stroke-width="1.3"/><line x1="130.80" y1="45.5" x2="130.80" y2="474.5" stroke="#d4d4d4" stroke-width="1.3"/><line x1="164.50" y1="45.5" x2="164.50" y2="474.5" stroke="#e2e2e2" stroke-width="1.3"/><line x1="198.20" y1="45.5" x2="198.20" y2="474.5" stroke="#d4d4d4" stroke-width="1.3"/><line x1="231.90" y1="45.5" x2="231.90" y2="474.5" stroke="#e2e2e2" stroke-width="1.3"/><line x1="265.60" y1="45.5" x2="265.60" y2="474.5" stroke="#d4d4d4" stroke-width="1.3"/><line x1="299.30" y1="45.5" x2="299.30" y2="474.5" stroke="#e2e2e2" stroke-width="1.3"/><line x1="333.00" y1="45.5" x2="333.00" y2="474.5" stroke="#d4d4d4" stroke-width="1.3"/><line x1="366.70" y1="45.5" x2="366.70" y2="474.5" stroke="#e2e2e2" stroke-width="1.3"/><line x1="400.40" y1="45.5" x2="400.40" y2="474.5" stroke="#d4d4d4" stroke-width="1.3"/><line x1="434.10" y1="45.5" x2="434.10" y2="474.5" stroke="#e2e2e2" stroke-width="1.3"/><line x1="467.80" y1="45.5" x2="467.80" y2="474.5" stroke="#d4d4d4" stroke-width="1.3"/><line x1="501.50" y1="45.5" x2="501.50" y2="474.5" stroke="#e2e2e2" stroke-width="1.3"/><line x1="535.20" y1="45.5" x2="535.20" y2="474.5" stroke="#d4d4d4" stroke-width="1.3"/><line x1="63.4" y1="464.88" x2="568.5" y2="464.88" stroke="#d9d9d9" stroke-width="1.3"/><line x1="63.4" y1="442.12" x2="568.5" y2="442.12" stroke="#d9d9d9" stroke-width="1.3"/><line x1="63.4" y1="419.36" x2="568.5" y2="419.36" stroke="#d9d9d9" stroke-width="1.3"/><line x1="63.4" y1="396.59" x2="568.5" y2="396.59" stroke="#d9d9d9" stroke-width="1.3"/><line x1="63.4" y1="373.82" x2="568.5" y2="373.82" stroke="#d9d9d9" stroke-width="1.3"/><line x1="63.4" y1="351.06" x2="568.5" y2="351.06" stroke="#d9d9d9" stroke-width="1.3"/><line x1="63.4" y1="328.30" x2="568.5" y2="328.30" stroke="#d9d9d9" stroke-width="1.3"/><line x1="63.4" y1="305.53" x2="568.5" y2="305.53" stroke="#d9d9d9" stroke-width="1.3"/><line x1="63.4" y1="282.76" x2="568.5" y2="282.76" stroke="#d9d9d9" stroke-width="1.3"/><line x1="63.4" y1="260.00" x2="568.5" y2="260.00" stroke="#d9d9d9" stroke-width="1.3"/><line x1="63.4" y1="237.24" x2="568.5" y2="237.24" stroke="#d9d9d9" stroke-width="1.3"/><line x1="63.4" y1="214.47" x2="568.5" y2="214.47" stroke="#d9d9d9" stroke-width="1.3"/><line x1="63.4" y1="191.70" x2="568.5" y2="191.70" stroke="#d9d9d9" stroke-width="1.3"/><line x1="63.4" y1="168.94" x2="568.5" y2="168.94" stroke="#d9d9d9" stroke-width="1.3"/><line x1="63.4" y1="146.18" x2="568.5" y2="146.18" stroke="#d9d9d9" stroke-width="1.3"/><line x1="63.4" y1="123.41" x2="568.5" y2="123.41" stroke="#d9d9d9" stroke-width="1.3"/><line x1="63.4" y1="100.64" x2="568.5" y2="100.64" stroke="#d9d9d9" stroke-width="1.3"/><line x1="63.4" y1="77.88" x2="568.5" y2="77.88" stroke="#d9d9d9" stroke-width="1.3"/><line x1="63.4" y1="55.12" x2="568.5" y2="55.12" stroke="#d9d9d9" stroke-width="1.3"/><rect x="63.4" y="45.5" width="505.1" height="429.0" fill="none" stroke="#6a6a6a" stroke-width="1.3"/><polyline points="63.40,260.00 63.96,257.15 64.52,254.29 65.08,251.44 65.64,248.60 66.20,245.76 66.76,242.92 67.32,240.09 67.88,237.27 68.44,234.46 69.00,231.67 69.56,228.88 70.12,226.11 70.68,223.35 71.24,220.61 71.81,217.89 72.37,215.18 72.93,212.49 73.49,209.83 74.05,207.19 74.61,204.57 75.17,201.97 75.73,199.40 76.29,196.85 76.85,194.34 77.41,191.85 77.97,189.39 78.53,186.96 79.09,184.57 79.65,182.21 80.21,179.88 80.77,177.58 81.33,175.32 81.89,173.10 82.45,170.92 83.01,168.78 83.57,166.67 84.13,164.61 84.69,162.59 85.25,160.61 85.81,158.67 86.37,156.78 86.93,154.93 87.50,153.13 88.06,151.38 88.62,149.67 89.18,148.01 89.74,146.41 90.30,144.85 90.86,143.34 91.42,141.88 91.98,140.47 92.54,139.11 93.10,137.81 93.66,136.56 94.22,135.37 94.78,134.23 95.34,133.14 95.90,132.11 96.46,131.14 97.02,130.22 97.58,129.36 98.14,128.55 98.70,127.81 99.26,127.12 99.82,126.49 100.38,125.91 100.94,125.40 101.50,124.94 102.06,124.55 102.62,124.21 103.19,123.93 103.75,123.71 104.31,123.55 104.87,123.45 105.43,123.41 105.99,123.43 106.55,123.51 107.11,123.65 107.67,123.85 108.23,124.10 108.79,124.42 109.35,124.80 109.91,125.23 110.47,125.73 111.03,126.28 111.59,126.89 112.15,127.56 112.71,128.28 113.27,129.07 113.83,129.91 114.39,130.81 114.95,131.76 115.51,132.77 116.07,133.84 116.63,134.96 117.19,136.14 117.75,137.37 118.31,138.65 118.88,139.99 119.44,141.38 120.00,142.82 120.56,144.31 121.12,145.85 121.68,147.44 122.24,149.09 122.80,150.78 123.36,152.51 123.92,154.30 124.48,156.13 125.04,158.00 125.60,159.92 126.16,161.89 126.72,163.90 127.28,165.94 127.84,168.03 128.40,170.16 128.96,172.33 129.52,174.54 130.08,176.79 130.64,179.07 131.20,181.38 131.76,183.74 132.32,186.12 132.88,188.54 133.44,190.98 134.00,193.46 134.57,195.97 135.13,198.50 135.69,201.06 136.25,203.65 136.81,206.26 137.37,208.90 137.93,211.56 138.49,214.24 139.05,216.94 139.61,219.65 140.17,222.39 140.73,225.14 141.29,227.91 141.85,230.69 142.41,233.48 142.97,236.29 143.53,239.10 144.09,241.93 144.65,244.76 145.21,247.60 145.77,250.44 146.33,253.29 146.89,256.15 147.45,259.00 148.01,261.85 148.57,264.71 149.13,267.56 149.69,270.40 150.26,273.25 150.82,276.09 151.38,278.92 151.94,281.74 152.50,284.55 153.06,287.35 153.62,290.14 154.18,292.92 154.74,295.68 155.30,298.43 155.86,301.16 156.42,303.87 156.98,306.57 157.54,309.24 158.10,311.89 158.66,314.52 159.22,317.12 159.78,319.70 160.34,322.26 160.90,324.78 161.46,327.28 162.02,329.75 162.58,332.19 163.14,334.60 163.70,336.97 164.26,339.31 164.82,341.62 165.38,343.89 165.95,346.12 166.51,348.32 167.07,350.48 167.63,352.59 168.19,354.67 168.75,356.71 169.31,358.70 169.87,360.65 170.43,362.56 170.99,364.42 171.55,366.24 172.11,368.01 172.67,369.73 173.23,371.41 173.79,373.04 174.35,374.61 174.91,376.14 175.47,377.62 176.03,379.04 176.59,380.42 177.15,381.74 177.71,383.00 178.27,384.22 178.83,385.38 179.39,386.48 179.95,387.53 180.51,388.53 181.07,389.46 181.64,390.35 182.20,391.17 182.76,391.94 183.32,392.65 183.88,393.30 184.44,393.89 185.00,394.43 185.56,394.90 186.12,395.32 186.68,395.68 187.24,395.98 187.80,396.22 188.36,396.40 188.92,396.52 189.48,396.58 190.04,396.58 190.60,396.53 191.16,396.41 191.72,396.23 192.28,395.99 192.84,395.70 193.40,395.34 193.96,394.93 194.52,394.45 195.08,393.92 195.64,393.33 196.20,392.68 196.76,391.98 197.33,391.21 197.89,390.39 198.45,389.51 199.01,388.58 199.57,387.59 200.13,386.54 200.69,385.44 201.25,384.28 201.81,383.07 202.37,381.80 202.93,380.49 203.49,379.12 204.05,377.69 204.61,376.22 205.17,374.69 205.73,373.12 206.29,371.50 206.85,369.82 207.41,368.10 207.97,366.33 208.53,364.52 209.09,362.66 209.65,360.75 210.21,358.81 210.77,356.81 211.33,354.78 211.89,352.70 212.45,350.59 213.02,348.43 213.58,346.24 214.14,344.01 214.70,341.74 215.26,339.43 215.82,337.09 216.38,334.72 216.94,332.32 217.50,329.88 218.06,327.41 218.62,324.91 219.18,322.39 219.74,319.84 220.30,317.26 220.86,314.65 221.42,312.03 221.98,309.38 222.54,306.71 223.10,304.01 223.66,301.30 224.22,298.57 224.78,295.83 225.34,293.07 225.90,290.29 226.46,287.50 227.02,284.70 227.58,281.89 228.14,279.06 228.71,276.23 229.27,273.40 229.83,270.55 230.39,267.71 230.95,264.86 231.51,262.00 232.07,259.15 232.63,256.29 233.19,253.44 233.75,250.59 234.31,247.75 234.87,244.91 235.43,242.08 235.99,239.25 236.55,236.43 237.11,233.63 237.67,230.83 238.23,228.05 238.79,225.28 239.35,222.53 239.91,219.80 240.47,217.08 241.03,214.38 241.59,211.70 242.15,209.04 242.71,206.40 243.27,203.79 243.83,201.20 244.40,198.64 244.96,196.10 245.52,193.59 246.08,191.11 246.64,188.66 247.20,186.25 247.76,183.86 248.32,181.51 248.88,179.19 249.44,176.91 250.00,174.66 250.56,172.45 251.12,170.28 251.68,168.15 252.24,166.05 252.80,164.00 253.36,161.99 253.92,160.03 254.48,158.10 255.04,156.23 255.60,154.39 256.16,152.61 256.72,150.87 257.28,149.17 257.84,147.53 258.40,145.93 258.96,144.39 259.52,142.89 260.08,141.45 260.65,140.06 261.21,138.72 261.77,137.43 262.33,136.20 262.89,135.02 263.45,133.90 264.01,132.83 264.57,131.82 265.13,130.86 265.69,129.96 266.25,129.11 266.81,128.32 267.37,127.59 267.93,126.92 268.49,126.31 269.05,125.75 269.61,125.26 270.17,124.82 270.73,124.44 271.29,124.12 271.85,123.86 272.41,123.66 272.97,123.52 273.53,123.43 274.09,123.41 274.65,123.45 275.21,123.54 275.77,123.70 276.34,123.92 276.90,124.19 277.46,124.53 278.02,124.92 278.58,125.37 279.14,125.88 279.70,126.45 280.26,127.08 280.82,127.77 281.38,128.51 281.94,129.31 282.50,130.17 283.06,131.09 283.62,132.06 284.18,133.09 284.74,134.17 285.30,135.31 285.86,136.50 286.42,137.75 286.98,139.05 287.54,140.40 288.10,141.80 288.66,143.26 289.22,144.76 289.78,146.32 290.34,147.93 290.90,149.58 291.46,151.29 292.03,153.04 292.59,154.84 293.15,156.68 293.71,158.57 294.27,160.51 294.83,162.48 295.39,164.50 295.95,166.56 296.51,168.67 297.07,170.81 297.63,172.99 298.19,175.21 298.75,177.46 299.31,179.76 299.87,182.08 300.43,184.44 300.99,186.84 301.55,189.26 302.11,191.72 302.67,194.21 303.23,196.72 303.79,199.26 304.35,201.83 304.91,204.43 305.47,207.05 306.03,209.69 306.59,212.35 307.15,215.04 307.72,217.74 308.28,220.47 308.84,223.21 309.40,225.96 309.96,228.74 310.52,231.52 311.08,234.32 311.64,237.13 312.20,239.94 312.76,242.77 313.32,245.61 313.88,248.45 314.44,251.29 315.00,254.14 315.56,257.00 316.12,259.85 316.68,262.70 317.24,265.56 317.80,268.41 318.36,271.25 318.92,274.10 319.48,276.93 320.04,279.76 320.60,282.58 321.16,285.39 321.72,288.19 322.28,290.97 322.84,293.75 323.41,296.50 323.97,299.25 324.53,301.97 325.09,304.68 325.65,307.36 326.21,310.03 326.77,312.68 327.33,315.30 327.89,317.89 328.45,320.47 329.01,323.01 329.57,325.53 330.13,328.02 330.69,330.48 331.25,332.91 331.81,335.31 332.37,337.67 332.93,340.00 333.49,342.30 334.05,344.56 334.61,346.78 335.17,348.97 335.73,351.11 336.29,353.22 336.85,355.28 337.41,357.31 337.97,359.29 338.53,361.23 339.10,363.12 339.66,364.97 340.22,366.77 340.78,368.53 341.34,370.24 341.90,371.90 342.46,373.51 343.02,375.07 343.58,376.59 344.14,378.05 344.70,379.46 345.26,380.82 345.82,382.12 346.38,383.37 346.94,384.57 347.50,385.71 348.06,386.80 348.62,387.84 349.18,388.81 349.74,389.73 350.30,390.60 350.86,391.41 351.42,392.16 351.98,392.85 352.54,393.48 353.10,394.06 353.66,394.58 354.22,395.04 354.79,395.44 355.35,395.78 355.91,396.06 356.47,396.28 357.03,396.44 357.59,396.55 358.15,396.59 358.71,396.57 359.27,396.50 359.83,396.36 360.39,396.17 360.95,395.91 361.51,395.60 362.07,395.22 362.63,394.79 363.19,394.30 363.75,393.75 364.31,393.14 364.87,392.48 365.43,391.75 365.99,390.97 366.55,390.13 367.11,389.24 367.67,388.29 368.23,387.28 368.79,386.22 369.35,385.10 369.91,383.92 370.48,382.70 371.04,381.42 371.60,380.08 372.16,378.70 372.72,377.26 373.28,375.77 373.84,374.23 374.40,372.64 374.96,371.00 375.52,369.31 376.08,367.58 376.64,365.80 377.20,363.97 377.76,362.10 378.32,360.18 378.88,358.22 379.44,356.21 380.00,354.16 380.56,352.08 381.12,349.95 381.68,347.78 382.24,345.58 382.80,343.33 383.36,341.05 383.92,338.74 384.48,336.39 385.04,334.01 385.60,331.59 386.17,329.15 386.73,326.67 387.29,324.16 387.85,321.63 388.41,319.07 388.97,316.48 389.53,313.87 390.09,311.24 390.65,308.58 391.21,305.90 391.77,303.21 392.33,300.49 392.89,297.76 393.45,295.00 394.01,292.24 394.57,289.46 395.13,286.67 395.69,283.86 396.25,281.05 396.81,278.22 397.37,275.39 397.93,272.55 398.49,269.70 399.05,266.86 399.61,264.00 400.17,261.15 400.73,258.30 401.29,255.44 401.86,252.59 402.42,249.74 402.98,246.90 403.54,244.06 404.10,241.23 404.66,238.41 405.22,235.60 405.78,232.79 406.34,230.00 406.90,227.23 407.46,224.46 408.02,221.71 408.58,218.98 409.14,216.27 409.70,213.58 410.26,210.90 410.82,208.25 411.38,205.62 411.94,203.01 412.50,200.43 413.06,197.88 413.62,195.35 414.18,192.85 414.74,190.38 415.30,187.94 415.86,185.53 416.42,183.15 416.98,180.81 417.55,178.50 418.11,176.23 418.67,174.00 419.23,171.80 419.79,169.64 420.35,167.52 420.91,165.44 421.47,163.40 422.03,161.40 422.59,159.45 423.15,157.54 423.71,155.67 424.27,153.85 424.83,152.08 425.39,150.36 425.95,148.68 426.51,147.05 427.07,145.47 427.63,143.94 428.19,142.46 428.75,141.03 429.31,139.65 429.87,138.33 430.43,137.06 430.99,135.84 431.55,134.68 432.11,133.57 432.67,132.52 433.24,131.52 433.80,130.58 434.36,129.70 434.92,128.87 435.48,128.10 436.04,127.39 436.60,126.73 437.16,126.14 437.72,125.60 438.28,125.12 438.84,124.70 439.40,124.34 439.96,124.03 440.52,123.79 441.08,123.61 441.64,123.48 442.20,123.42 442.76,123.42 443.32,123.47 443.88,123.58 444.44,123.76 445.00,123.99 445.56,124.29 446.12,124.64 446.68,125.05 447.24,125.52 447.80,126.05 448.36,126.64 448.93,127.28 449.49,127.98 450.05,128.75 450.61,129.56 451.17,130.44 451.73,131.37 452.29,132.36 452.85,133.40 453.41,134.50 453.97,135.66 454.53,136.87 455.09,138.13 455.65,139.44 456.21,140.81 456.77,142.23 457.33,143.70 457.89,145.22 458.45,146.80 459.01,148.42 459.57,150.09 460.13,151.81 460.69,153.57 461.25,155.38 461.81,157.24 462.37,159.14 462.93,161.09 463.49,163.08 464.05,165.11 464.61,167.19 465.18,169.30 465.74,171.45 466.30,173.65 466.86,175.88 467.42,178.14 467.98,180.45 468.54,182.78 469.10,185.15 469.66,187.56 470.22,189.99 470.78,192.46 471.34,194.95 471.90,197.48 472.46,200.03 473.02,202.61 473.58,205.21 474.14,207.83 474.70,210.48 475.26,213.15 475.82,215.84 476.38,218.55 476.94,221.28 477.50,224.03 478.06,226.79 478.62,229.56 479.18,232.35 479.74,235.15 480.30,237.97 480.87,240.79 481.43,243.62 481.99,246.45 482.55,249.30 483.11,252.14 483.67,254.99 484.23,257.85 484.79,260.70 485.35,263.56 485.91,266.41 486.47,269.26 487.03,272.10 487.59,274.94 488.15,277.78 488.71,280.60 489.27,283.42 489.83,286.22 490.39,289.02 490.95,291.80 491.51,294.57 492.07,297.32 492.63,300.06 493.19,302.78 493.75,305.48 494.31,308.16 494.87,310.82 495.43,313.46 495.99,316.07 496.56,318.66 497.12,321.23 497.68,323.77 498.24,326.28 498.80,328.76 499.36,331.21 499.92,333.63 500.48,336.02 501.04,338.37 501.60,340.69 502.16,342.98 502.72,345.22 503.28,347.44 503.84,349.61 504.40,351.74 504.96,353.84 505.52,355.89 506.08,357.90 506.64,359.87 507.20,361.80 507.76,363.68 508.32,365.51 508.88,367.30 509.44,369.04 510.00,370.74 510.56,372.39 511.12,373.98 511.68,375.53 512.25,377.03 512.81,378.47 513.37,379.87 513.93,381.21 514.49,382.50 515.05,383.74 515.61,384.92 516.17,386.04 516.73,387.12 517.29,388.13 517.85,389.09 518.41,390.00 518.97,390.85 519.53,391.64 520.09,392.37 520.65,393.04 521.21,393.66 521.77,394.22 522.33,394.72 522.89,395.16 523.45,395.54 524.01,395.87 524.57,396.13 525.13,396.33 525.69,396.48 526.25,396.56 526.81,396.59 527.37,396.56 527.94,396.46 528.50,396.31 529.06,396.10 529.62,395.82 530.18,395.49 530.74,395.10 531.30,394.65 531.86,394.14 532.42,393.58 532.98,392.95 533.54,392.27 534.10,391.53 534.66,390.73 535.22,389.87 535.78,388.96 536.34,387.99 536.90,386.97 537.46,385.89 538.02,384.75 538.58,383.56 539.14,382.32 539.70,381.02 540.26,379.67 540.82,378.27 541.38,376.82 541.94,375.32 542.50,373.76 543.06,372.16 543.63,370.50 544.19,368.80 544.75,367.05 545.31,365.26 545.87,363.41 546.43,361.53 546.99,359.60 547.55,357.62 548.11,355.60 548.67,353.55 549.23,351.45 549.79,349.31 550.35,347.13 550.91,344.91 551.47,342.66 552.03,340.37 552.59,338.04 553.15,335.68 553.71,333.29 554.27,330.86 554.83,328.41 555.39,325.92 555.95,323.41 556.51,320.87 557.07,318.30 557.63,315.71 558.19,313.09 558.75,310.45 559.32,307.79 559.88,305.10 560.44,302.40 561.00,299.68 561.56,296.94 562.12,294.18 562.68,291.41 563.24,288.63 563.80,285.83 564.36,283.02 564.92,280.20 565.48,277.38 566.04,274.54 566.60,271.70 567.16,268.86 567.72,266.01" fill="none" stroke="#a04c5e" stroke-width="1.5"/><line x1="677.82" y1="45.5" x2="677.82" y2="474.0" stroke="#d2d2d2" stroke-width="1.2"/><line x1="699.33" y1="45.5" x2="699.33" y2="474.0" stroke="#e2e2e2" stroke-width="1.2"/><line x1="716.01" y1="45.5" x2="716.01" y2="474.0" stroke="#d2d2d2" stroke-width="1.2"/><line x1="729.64" y1="45.5" x2="729.64" y2="474.0" stroke="#e2e2e2" stroke-width="1.2"/><line x1="741.17" y1="45.5" x2="741.17" y2="474.0" stroke="#e2e2e2" stroke-width="1.2"/><line x1="751.15" y1="45.5" x2="751.15" y2="474.0" stroke="#e2e2e2" stroke-width="1.2"/><line x1="759.96" y1="45.5" x2="759.96" y2="474.0" stroke="#e2e2e2" stroke-width="1.2"/><line x1="767.84" y1="45.5" x2="767.84" y2="474.0" stroke="#d2d2d2" stroke-width="1.2"/><line x1="819.67" y1="45.5" x2="819.67" y2="474.0" stroke="#d2d2d2" stroke-width="1.2"/><line x1="849.98" y1="45.5" x2="849.98" y2="474.0" stroke="#d2d2d2" stroke-width="1.2"/><line x1="871.49" y1="45.5" x2="871.49" y2="474.0" stroke="#e2e2e2" stroke-width="1.2"/><line x1="888.18" y1="45.5" x2="888.18" y2="474.0" stroke="#d2d2d2" stroke-width="1.2"/><line x1="901.81" y1="45.5" x2="901.81" y2="474.0" stroke="#e2e2e2" stroke-width="1.2"/><line x1="913.34" y1="45.5" x2="913.34" y2="474.0" stroke="#e2e2e2" stroke-width="1.2"/><line x1="923.32" y1="45.5" x2="923.32" y2="474.0" stroke="#e2e2e2" stroke-width="1.2"/><line x1="932.13" y1="45.5" x2="932.13" y2="474.0" stroke="#e2e2e2" stroke-width="1.2"/><line x1="940.01" y1="45.5" x2="940.01" y2="474.0" stroke="#d2d2d2" stroke-width="1.2"/><line x1="991.83" y1="45.5" x2="991.83" y2="474.0" stroke="#d2d2d2" stroke-width="1.2"/><line x1="1022.15" y1="45.5" x2="1022.15" y2="474.0" stroke="#d2d2d2" stroke-width="1.2"/><line x1="1043.66" y1="45.5" x2="1043.66" y2="474.0" stroke="#e2e2e2" stroke-width="1.2"/><line x1="1060.35" y1="45.5" x2="1060.35" y2="474.0" stroke="#d2d2d2" stroke-width="1.2"/><line x1="1073.98" y1="45.5" x2="1073.98" y2="474.0" stroke="#e2e2e2" stroke-width="1.2"/><line x1="1085.50" y1="45.5" x2="1085.50" y2="474.0" stroke="#e2e2e2" stroke-width="1.2"/><line x1="1095.49" y1="45.5" x2="1095.49" y2="474.0" stroke="#e2e2e2" stroke-width="1.2"/><line x1="1104.29" y1="45.5" x2="1104.29" y2="474.0" stroke="#e2e2e2" stroke-width="1.2"/><line x1="1112.17" y1="45.5" x2="1112.17" y2="474.0" stroke="#d2d2d2" stroke-width="1.2"/><line x1="647.5" y1="45.50" x2="1164.0" y2="45.50" stroke="#d9d9d9" stroke-width="1.3"/><line x1="647.5" y1="70.71" x2="1164.0" y2="70.71" stroke="#d9d9d9" stroke-width="1.3"/><line x1="647.5" y1="95.91" x2="1164.0" y2="95.91" stroke="#d9d9d9" stroke-width="1.3"/><line x1="647.5" y1="121.12" x2="1164.0" y2="121.12" stroke="#d9d9d9" stroke-width="1.3"/><line x1="647.5" y1="146.32" x2="1164.0" y2="146.32" stroke="#d9d9d9" stroke-width="1.3"/><line x1="647.5" y1="171.53" x2="1164.0" y2="171.53" stroke="#d9d9d9" stroke-width="1.3"/><line x1="647.5" y1="196.74" x2="1164.0" y2="196.74" stroke="#d9d9d9" stroke-width="1.3"/><line x1="647.5" y1="221.94" x2="1164.0" y2="221.94" stroke="#d9d9d9" stroke-width="1.3"/><line x1="647.5" y1="247.15" x2="1164.0" y2="247.15" stroke="#d9d9d9" stroke-width="1.3"/><line x1="647.5" y1="272.35" x2="1164.0" y2="272.35" stroke="#d9d9d9" stroke-width="1.3"/><line x1="647.5" y1="297.56" x2="1164.0" y2="297.56" stroke="#d9d9d9" stroke-width="1.3"/><line x1="647.5" y1="322.76" x2="1164.0" y2="322.76" stroke="#d9d9d9" stroke-width="1.3"/><line x1="647.5" y1="347.97" x2="1164.0" y2="347.97" stroke="#d9d9d9" stroke-width="1.3"/><line x1="647.5" y1="373.18" x2="1164.0" y2="373.18" stroke="#d9d9d9" stroke-width="1.3"/><line x1="647.5" y1="398.38" x2="1164.0" y2="398.38" stroke="#d9d9d9" stroke-width="1.3"/><line x1="647.5" y1="423.59" x2="1164.0" y2="423.59" stroke="#d9d9d9" stroke-width="1.3"/><line x1="647.5" y1="448.79" x2="1164.0" y2="448.79" stroke="#d9d9d9" stroke-width="1.3"/><line x1="647.5" y1="474.00" x2="1164.0" y2="474.00" stroke="#d9d9d9" stroke-width="1.3"/><clipPath id="fc"><rect x="647.5" y="45.5" width="516.5" height="428.5"/></clipPath><g clip-path="url(#fc)"><polyline points="648.00,464.00 648.44,464.54 649.04,465.30 649.75,466.19 650.52,467.15 651.29,468.11 652.00,469.00 652.66,469.86 653.30,470.74 653.94,471.62 654.59,472.48 655.28,473.28 656.00,474.00 656.79,474.96 657.63,476.26 658.50,477.00 659.37,477.00 660.21,477.00 661.00,477.00 661.72,474.13 662.41,469.89 663.06,464.81 663.70,459.44 664.34,454.33 665.00,450.00 665.64,446.29 666.26,442.74 666.88,439.44 667.52,436.48 668.22,433.97 669.00,432.00 669.87,430.67 670.81,429.93 671.81,429.62 672.85,429.63 673.92,429.80 675.00,430.00 676.12,430.30 677.30,430.81 678.50,431.50 679.70,432.30 680.88,433.15 682.00,434.00 683.07,434.90 684.11,435.89 685.12,436.94 686.11,438.00 687.07,439.03 688.00,440.00 688.87,440.82 689.67,441.52 690.44,442.19 691.22,442.93 692.06,443.83 693.00,445.00 694.05,446.74 695.19,449.04 696.38,451.50 697.59,453.74 698.81,455.37 700.00,456.00 701.17,455.41 702.33,453.85 703.50,451.69 704.67,449.26 705.83,446.91 707.00,445.00 708.18,443.33 709.37,441.59 710.56,439.94 711.74,438.52 712.89,437.49 714.00,437.00 715.07,437.29 716.11,438.30 717.12,439.69 718.11,441.15 719.07,442.36 720.00,443.00 720.89,442.81 721.74,442.00 722.56,440.94 723.37,440.00 724.18,439.56 725.00,440.00 725.83,441.45 726.67,443.63 727.50,446.31 728.33,449.26 729.17,452.23 730.00,455.00 730.82,458.04 731.63,461.63 732.44,465.25 733.26,468.37 734.11,470.46 735.00,471.00 735.94,469.62 736.93,466.67 737.94,462.69 738.96,458.22 739.99,453.81 741.00,450.00 742.02,446.39 743.07,442.48 744.12,438.62 745.15,435.19 746.12,432.52 747.00,431.00 747.79,430.59 748.52,431.00 749.19,432.19 749.81,434.11 750.41,436.73 751.00,440.00 751.52,444.59 751.96,450.67 752.38,457.44 752.81,464.11 753.34,469.90 754.00,474.00 754.86,476.45 755.89,477.00 757.00,477.00 758.11,477.00 759.14,477.00 760.00,476.00 760.66,473.80 761.19,470.59 761.62,466.75 762.04,462.63 762.48,458.59 763.00,455.00 763.62,451.58 764.30,448.00 765.00,444.50 765.70,441.33 766.38,438.75 767.00,437.00 767.56,436.09 768.07,435.81 768.56,436.12 769.04,436.96 769.51,438.27 770.00,440.00 770.51,442.40 771.04,445.56 771.56,449.19 772.07,453.00 772.56,456.70 773.00,460.00 773.37,463.35 773.67,467.07 773.94,470.69 774.22,473.70 774.56,475.64 775.00,476.00 775.57,474.20 776.26,470.52 777.00,465.75 777.74,460.70 778.43,456.19 779.00,453.00 779.43,451.06 779.74,449.70 780.00,448.88 780.26,448.52 780.57,448.58 781.00,449.00 781.55,449.91 782.19,451.37 782.88,453.25 783.59,455.41 784.31,457.70 785.00,460.00 785.66,462.75 786.30,466.15 786.94,469.69 787.59,472.85 788.28,475.13 789.00,476.00 789.80,475.06 790.67,472.63 791.56,469.31 792.44,465.70 793.27,462.40 794.00,460.00 794.62,458.58 795.15,457.67 795.62,457.06 796.07,456.56 796.52,455.94 797.00,455.00 797.50,453.59 798.00,451.85 798.50,450.00 799.00,448.26 799.50,446.85 800.00,446.00 800.50,445.83 801.00,446.19 801.50,446.88 802.00,447.70 802.50,448.48 803.00,449.00 803.53,449.29 804.11,449.52 804.69,449.69 805.22,449.81 805.67,449.91 806.00,450.00 808.46,456.63 808.87,456.99 809.47,457.37 810.14,458.74 810.76,462.11 811.32,469.87 811.88,477.00 812.44,477.00 812.99,477.00 813.54,477.00 814.08,477.00 814.62,465.38 815.16,457.28 815.69,455.02 816.22,455.77 816.74,457.80 817.27,459.39 817.78,460.88 818.30,462.91 818.81,464.24 819.31,463.63 819.82,459.43 820.32,452.74 820.81,446.43 821.31,443.35 821.80,445.05 822.29,449.75 822.77,455.29 823.25,459.50 823.73,461.66 824.20,462.97 824.67,464.16 825.14,465.93 825.61,469.78 826.07,474.88 826.53,477.00 826.99,477.00 827.17,468.96 827.44,470.24 827.47,423.59 827.77,468.96 827.90,457.60 828.35,444.95 828.79,437.24 829.24,437.08 829.68,441.42 830.12,446.65 830.55,449.16 830.98,446.50 831.42,441.09 831.84,436.64 832.27,436.85 832.69,444.85 833.12,457.95 833.53,471.13 833.95,477.00 834.36,477.00 834.78,477.00 835.19,475.31 835.59,469.68 836.00,459.85 836.40,446.24 836.80,434.89 837.20,431.81 837.60,441.81 837.99,460.62 838.39,477.00 838.78,477.00 839.16,477.00 839.55,477.00 839.94,477.00 840.32,477.00 840.70,477.00 841.08,477.00 841.45,472.59 841.83,466.88 842.20,465.03 842.57,465.46 842.94,466.00 843.31,464.51 843.67,459.91 844.04,453.52 844.40,446.76 844.76,441.04 845.12,435.68 845.48,430.30 845.83,426.68 846.19,426.62 846.54,432.91 846.89,443.83 847.24,454.38 847.58,459.58 847.93,456.38 848.27,448.02 848.61,438.92 848.95,433.50 849.29,433.48 849.63,436.32 849.97,440.07 850.30,442.75 850.64,444.32 850.97,445.67 851.30,446.23 851.63,445.45 851.95,441.79 852.28,436.02 852.60,431.00 852.93,429.58 853.25,433.88 853.57,441.93 853.89,450.44 854.20,456.12 854.52,457.11 854.84,455.48 855.15,453.88 855.46,454.94 855.77,460.97 856.08,470.02 856.39,477.00 856.70,477.00 857.00,477.00 857.31,471.83 857.61,463.72 857.91,458.77 858.21,458.67 858.51,461.15 858.81,464.12 859.11,465.49 859.40,464.17 859.70,461.45 859.99,458.81 860.29,457.71 860.58,459.28 860.87,462.48 861.16,465.57 861.45,466.81 861.73,465.36 862.02,462.28 862.30,458.64 862.59,455.53 862.87,451.87 863.15,447.55 863.43,445.05 863.71,446.88 863.99,455.88 864.27,469.98 864.54,477.00 864.82,477.00 865.09,477.00 865.37,477.00 865.64,477.00 865.91,477.00 866.18,477.00 866.45,477.00 866.72,477.00 866.99,477.00 867.25,477.00 867.52,476.24 867.78,473.31 868.05,469.67 868.31,464.63 868.57,458.61 868.83,452.83 869.09,448.51 869.35,446.09 869.61,444.87 869.87,444.40 870.12,444.23 870.38,444.84 870.63,446.27 870.89,447.42 871.14,447.18 871.39,443.73 871.65,438.17 871.90,433.77 872.15,433.82 872.39,441.57 872.64,454.47 872.89,467.11 873.14,474.08 873.38,471.81 873.63,463.90 873.87,455.67 874.11,452.42 874.36,457.67 874.60,467.88 874.84,477.00 875.08,477.00 875.32,477.00 875.56,466.18 875.79,455.61 876.03,451.70 876.27,458.46 876.50,471.77 876.74,477.00 876.97,477.00 877.20,477.00 877.44,477.00 877.67,477.00 877.90,477.00 878.13,467.18 878.36,446.35 878.59,426.76 878.82,415.40 879.04,415.13 879.27,421.89 879.50,432.27 879.72,442.88 879.95,455.66 880.17,471.48 880.40,477.00 880.62,477.00 880.84,477.00 881.06,474.48 881.28,461.41 881.50,455.56 881.72,461.82 881.94,475.22 882.16,477.00 882.38,477.00 882.60,477.00 882.81,476.63 883.03,462.75 883.24,451.99 883.46,444.60 883.67,438.32 883.88,434.30 884.10,433.71 884.31,438.33 884.52,447.05 884.73,456.68 884.94,464.02 885.15,469.01 885.36,473.10 885.57,475.33 885.78,474.76 885.99,469.87 886.19,461.60 886.40,452.66 886.60,445.74 886.81,441.16 887.01,437.60 887.22,435.39 887.42,434.83 887.62,435.82 887.83,438.26 888.03,442.47 888.23,448.74 888.43,459.45 888.63,473.65 888.83,477.00 889.03,477.00 889.23,477.00 889.43,477.00 889.62,477.00 889.82,472.86 890.02,463.91 890.21,453.16 890.41,443.30 890.60,437.05 890.80,436.23 890.99,439.04 891.19,442.69 891.38,444.42 891.57,443.27 891.76,440.79 891.95,437.96 892.15,435.77 892.34,433.40 892.53,430.67 892.72,429.58 892.90,432.15 893.09,441.68 893.28,456.19 893.47,469.70 893.66,476.24 893.84,471.66 894.03,460.01 894.21,447.57 894.40,440.65 894.58,442.16 894.77,448.32 894.95,455.41 895.14,459.72 895.32,460.19 895.50,458.84 895.68,456.50 895.87,454.00 896.05,450.34 896.23,445.47 896.41,441.70 896.59,441.32 896.77,447.13 896.95,457.18 897.13,466.61 897.30,470.53 897.48,465.29 897.66,454.27 897.84,443.17 898.01,437.69 898.19,441.47 898.36,450.76 898.54,460.20 898.71,464.45 898.89,460.32 899.06,451.24 899.24,441.82 899.41,436.67 899.58,438.18 899.76,443.52 899.93,449.41 900.10,452.58 900.27,451.57 900.44,448.31 900.61,444.65 900.78,442.41 900.95,441.14 901.12,440.18 901.29,441.06 901.46,445.32 901.63,455.86 901.79,471.02 901.96,477.00 902.13,477.00 902.30,477.00 902.46,477.00 902.63,477.00 902.79,476.66 902.96,468.47 903.12,458.25 903.29,449.82 903.45,447.00 903.62,454.06 903.78,467.86 903.94,477.00 904.11,477.00 904.28,477.00 904.47,467.07 904.64,452.28 904.75,442.30 905.00,455.60 905.56,477.00" fill="none" stroke="#5060a8" stroke-width="1.2" stroke-linejoin="round"/><polyline points="904.11,477.00 904.28,477.00 904.47,467.07 904.64,452.28 904.75,442.30 905.00,455.60 905.56,477.00 906.12,442.24 906.68,453.25 907.24,444.52 907.80,477.00 908.36,456.18 908.92,477.00 909.48,451.84 910.04,477.00 910.60,477.00 911.16,446.35 911.72,477.00 912.28,446.46 912.84,474.57 913.40,446.31 913.96,476.42 914.52,428.61 915.08,456.72 915.64,442.96 916.20,477.00 916.76,448.82 917.32,471.80 917.88,452.02 918.44,477.00 919.00,453.47 919.56,477.00 920.12,431.06 920.68,477.00 921.24,439.00 921.80,477.00 922.36,451.05 922.92,469.09 923.48,456.21 924.04,477.00 924.60,444.76 925.16,477.00 925.72,447.05 926.28,477.00 926.84,441.89 927.40,474.47 927.96,445.02 928.52,476.60 929.08,451.87 929.64,476.20 930.20,441.89 930.76,477.00 931.32,441.76 931.88,455.25 932.44,447.99 933.00,477.00 933.56,447.86 934.12,464.51 934.68,434.35 935.24,441.44 935.80,444.11 936.36,468.83 936.92,430.78 937.48,445.10 938.04,459.02 938.60,446.27 939.16,463.52 939.72,448.58 940.28,464.46 940.84,465.64 941.40,464.76 941.96,429.57 942.52,449.10 943.08,474.67 943.64,442.51 944.20,477.00 944.76,442.91 945.32,454.74 945.88,449.90 946.44,454.54 947.00,442.16 947.56,468.50 948.12,440.73 948.68,477.00 949.24,459.51 949.80,444.27 950.36,477.00 950.92,449.12 951.48,477.00 952.04,438.79 952.60,477.00 953.16,433.92 953.72,477.00 954.28,442.02 954.84,477.00 955.40,477.00 955.96,440.94 956.52,440.87 957.08,474.86 957.64,473.76 958.20,442.82 958.76,477.00 959.32,441.20 959.88,477.00 960.44,447.73 961.00,459.90 961.56,447.41 962.12,477.00 962.68,447.71 963.24,477.00 963.80,441.41 964.36,460.53 964.92,443.85 965.48,456.60 966.04,444.04 966.60,477.00 967.16,444.41 967.72,477.00 968.28,442.13 968.84,477.00 969.40,442.98 969.96,477.00 970.52,453.52 971.08,445.02 971.64,477.00 972.20,437.90 972.76,477.00 973.32,443.26 973.88,451.77 974.44,447.98 975.00,477.00 975.56,436.96 976.12,444.50 976.68,477.00 977.24,439.51 977.80,477.00 978.36,447.74 978.92,471.67 979.48,445.71 980.04,477.00 980.60,445.68 981.16,477.00 981.72,430.37 982.28,477.00 982.84,454.31 983.40,458.94 983.96,435.54 984.52,454.98 985.08,472.82 985.64,448.86 986.20,441.46 986.76,454.07 987.32,477.00 987.88,445.81 988.44,476.48 989.00,428.83 989.56,458.73 990.12,447.51 990.68,477.00 991.24,440.43 991.53,468.96 991.80,445.99 991.83,380.74 992.13,468.96 992.36,477.00 992.92,436.85 993.48,477.00 994.04,444.68 994.60,473.67 995.16,446.59 995.72,477.00 996.28,477.00 996.84,442.94 997.40,477.00 997.96,444.53 998.52,477.00 999.08,438.06 999.64,437.05 1000.20,476.26 1000.76,447.68 1001.32,461.73 1001.88,448.03 1002.44,475.20 1003.00,442.97 1003.56,477.00 1004.12,445.01 1004.68,477.00 1005.24,440.41 1005.80,477.00 1006.36,443.98 1006.92,464.22 1007.48,445.46 1008.04,459.97 1008.60,445.08 1009.16,463.96 1009.72,439.01 1010.28,477.00 1010.84,477.00 1011.40,444.87 1011.96,440.64 1012.52,477.00 1013.08,446.72 1013.64,477.00 1014.20,441.47 1014.76,477.00 1015.32,439.24 1015.88,477.00 1016.44,443.12 1017.00,451.70 1017.56,440.72 1018.12,474.02 1018.68,443.68 1019.24,477.00 1019.80,441.09 1020.36,477.00 1020.92,445.94 1021.48,477.00 1021.85,468.96 1022.04,451.86 1022.15,390.82 1022.45,468.96 1022.60,477.00 1023.16,445.44 1023.72,474.06 1024.28,467.67 1024.84,446.55 1025.40,456.97 1025.96,443.37 1026.52,477.00 1027.08,446.10 1027.64,460.26 1028.20,448.73 1028.76,474.52 1029.32,450.40 1029.88,477.00 1030.44,445.83 1031.00,446.41 1031.56,443.46 1032.12,477.00 1032.68,438.23 1033.24,477.00 1033.80,444.09 1034.36,460.58 1034.92,441.12 1035.48,477.00 1036.04,427.36 1036.60,477.00 1037.16,438.49 1037.72,473.19 1038.28,438.92 1038.84,477.00 1039.40,473.08 1039.96,445.14 1040.52,474.26 1041.08,444.31 1041.64,477.00 1042.20,442.36 1042.76,477.00 1043.32,444.09 1043.88,475.67 1044.44,431.64 1045.00,442.97 1045.56,477.00 1046.12,446.20 1046.68,477.00 1047.24,444.15 1047.80,477.00 1048.36,447.11 1048.92,473.14 1049.48,442.12 1050.04,454.25 1050.60,441.01 1051.16,441.04 1051.72,477.00 1052.28,446.31 1052.84,477.00 1053.40,477.00 1053.96,428.92 1054.52,477.00 1055.08,447.00 1055.64,454.69 1056.20,439.84 1056.76,473.98 1057.32,477.00 1057.88,446.48 1058.44,445.50 1059.00,477.00 1059.56,445.55 1060.05,468.96 1060.12,456.19 1060.35,400.90 1060.65,468.96 1060.68,477.00 1061.24,444.09 1061.80,436.79 1062.36,477.00 1062.92,444.10 1063.48,460.79 1064.04,444.20 1064.60,438.61 1065.16,477.00 1065.72,445.81 1066.28,475.00 1066.84,447.46 1067.40,476.13 1067.96,440.54 1068.52,452.27 1069.08,445.05 1069.64,477.00 1070.20,455.93 1070.76,477.00 1071.32,442.66 1071.88,477.00 1072.44,460.53 1073.00,451.77 1073.56,476.86 1074.12,440.83 1074.68,472.40 1075.24,440.85 1075.80,448.79 1076.36,477.00 1076.92,440.28 1077.48,477.00 1078.04,473.22 1078.60,440.18 1079.16,476.76 1079.72,445.93 1080.28,477.00 1080.84,442.84 1081.40,477.00 1081.96,458.52 1082.52,436.63 1083.08,477.00 1083.64,447.52 1084.20,442.16 1084.76,452.07 1085.32,446.88 1085.88,473.86 1086.44,448.89 1087.00,445.85 1087.56,475.63 1088.12,438.18 1088.68,477.00 1089.24,446.47 1089.80,447.94 1090.36,477.00 1090.92,438.84 1091.48,456.96 1092.04,443.65 1092.60,474.77 1093.16,472.07 1093.72,446.59 1094.28,446.13 1094.84,477.00 1095.40,443.75 1095.96,477.00 1096.52,441.52 1097.08,459.81 1097.64,442.79 1098.20,467.64 1098.76,444.77 1099.32,477.00 1099.88,443.75 1100.44,477.00 1101.00,444.30 1101.56,437.01 1102.12,456.24 1102.68,441.16 1103.24,477.00 1103.80,437.80 1104.36,474.30 1104.92,440.05 1105.48,477.00 1106.04,442.66 1106.60,459.15 1107.16,443.79 1107.72,473.98 1108.28,444.82 1108.84,472.08 1109.40,444.03 1109.96,475.74 1110.52,477.00 1111.08,462.50 1111.64,444.53 1112.20,477.00 1112.76,444.81 1113.32,477.00 1113.88,443.00 1114.44,454.33 1115.00,446.93 1115.56,443.10 1116.12,475.09 1116.68,445.05 1117.24,474.69 1117.80,447.10 1118.36,476.22 1118.92,440.46 1119.48,460.72 1120.04,444.93 1120.60,477.00 1121.16,442.71 1121.72,459.93 1122.28,444.29 1122.84,473.88 1123.40,444.61 1123.96,476.43 1124.52,449.29 1125.08,475.47 1125.64,430.92 1126.20,477.00 1126.76,476.74 1127.32,475.29 1127.88,442.69 1128.44,475.62 1129.00,447.14 1129.56,477.00 1130.12,442.10 1130.68,460.77 1131.24,446.16 1131.80,474.14 1132.36,436.69 1132.92,461.44 1133.48,439.59 1134.04,477.00 1134.60,442.26 1135.16,477.00 1135.72,442.09 1136.28,439.84 1136.84,477.00 1137.40,446.57 1137.96,477.00 1138.52,446.43 1139.08,473.88 1139.64,450.39 1140.20,475.51 1140.76,423.17 1141.32,466.18 1141.88,443.53 1142.44,477.00 1143.00,448.25 1143.56,477.00 1144.12,450.24 1144.68,448.61 1145.24,477.00 1145.80,443.47 1146.36,474.62 1146.92,442.44 1147.48,473.47 1148.04,443.20 1148.60,477.00 1149.16,443.86 1149.72,477.00 1150.28,439.25 1150.84,477.00 1151.40,447.35 1151.96,477.00 1152.52,445.38 1153.08,452.21 1153.64,458.30 1154.20,448.42 1154.76,441.16 1155.32,454.88 1155.88,442.94 1156.44,464.46 1157.00,444.90 1157.56,477.00 1158.12,448.51 1158.68,477.00 1159.24,448.09 1159.80,473.37 1160.36,445.66 1160.92,458.69 1161.48,444.16 1162.04,455.29 1162.60,441.21 1163.16,477.00 1163.72,445.78 1164.28,477.00 1164.84,439.28" fill="none" stroke="#4a5a9c" stroke-width="1.1" stroke-linejoin="miter"/><polyline points="648.00,449.00 648.77,449.66 649.85,450.59 651.12,451.69 652.48,452.85 653.81,453.99 655.00,455.00 656.06,456.04 657.07,457.22 658.06,458.38 659.04,459.33 660.01,459.93 661.00,460.00 662.01,459.41 663.04,458.26 664.06,456.75 665.07,455.07 666.06,453.43 667.00,452.00 667.86,450.62 668.63,449.11 669.38,447.62 670.15,446.33 671.00,445.40 672.00,445.00 673.18,445.34 674.52,446.33 675.94,447.69 677.37,449.11 678.75,450.31 680.00,451.00 681.13,451.12 682.19,450.89 683.19,450.44 684.15,449.89 685.08,449.37 686.00,449.00 686.89,448.84 687.74,448.81 688.56,448.81 689.37,448.74 690.18,448.50 691.00,448.00 691.83,447.15 692.67,446.00 693.50,444.69 694.33,443.33 695.17,442.06 696.00,441.00 696.82,440.00 697.63,438.93 698.44,437.94 699.26,437.19 700.11,436.82 701.00,437.00 701.95,437.87 702.96,439.33 704.00,441.19 705.04,443.22 706.05,445.23 707.00,447.00 707.88,448.75 708.70,450.70 709.50,452.62 710.30,454.30 711.12,455.50 712.00,456.00 712.93,455.65 713.89,454.59 714.88,453.06 715.89,451.30 716.93,449.53 718.00,448.00 719.13,446.40 720.33,444.48 721.56,442.56 722.78,440.96 723.94,440.00 725.00,440.00 725.95,441.15 726.81,443.22 727.62,445.94 728.41,449.00 729.19,452.12 730.00,455.00 730.83,457.86 731.67,460.96 732.50,464.12 733.33,467.15 734.17,469.84 735.00,472.00 735.84,473.62 736.70,474.85 737.56,475.75 738.41,476.37 739.22,476.77 740.00,477.00 740.74,477.00 741.44,477.00 742.12,476.81 742.78,476.26 743.40,475.34 744.00,474.00 744.53,472.04 745.00,469.48 745.44,466.56 745.89,463.52 746.40,460.59 747.00,458.00 747.75,455.47 748.63,452.74 749.56,450.12 750.48,447.93 751.32,446.45 752.00,446.00 752.51,446.81 752.89,448.67 753.19,451.25 753.44,454.22 753.70,457.25 754.00,460.00 754.32,463.15 754.63,467.11 754.94,471.12 755.26,474.44 755.61,476.32 756.00,476.00 756.44,472.55 756.93,466.37 757.44,458.75 757.96,450.96 758.49,444.29 759.00,440.00 759.51,438.48 760.04,438.78 760.56,440.19 761.07,442.00 761.56,443.51 762.00,444.00 762.38,443.30 762.70,441.93 763.00,440.25 763.30,438.63 763.62,437.43 764.00,437.00 764.44,437.45 764.93,438.52 765.44,440.00 765.96,441.70 766.49,443.44 767.00,445.00 767.49,446.51 767.96,448.15 768.44,449.81 768.93,451.41 769.44,452.84 770.00,454.00 770.63,454.66 771.33,454.85 772.06,454.88 772.78,455.04 773.44,455.64 774.00,457.00 774.45,459.69 774.81,463.59 775.12,467.94 775.41,471.96 775.69,474.91 776.00,476.00 776.31,474.84 776.59,471.96 776.88,468.00 777.19,463.59 777.55,459.38 778.00,456.00 778.55,453.21 779.19,450.44 779.88,447.88 780.59,445.67 781.31,443.99 782.00,443.00 782.67,442.85 783.33,443.44 784.00,444.56 784.67,446.00 785.33,447.55 786.00,449.00 786.69,450.35 787.41,451.78 788.12,453.31 788.81,455.00 789.45,456.88 790.00,459.00 790.43,461.87 790.74,465.56 791.00,469.44 791.26,472.89 791.57,475.28 792.00,476.00 792.55,474.51 793.19,471.22 793.88,466.88 794.59,462.22 795.31,458.01 796.00,455.00 796.67,453.24 797.33,452.15 798.00,451.50 798.67,451.07 799.33,450.65 800.00,450.00 800.71,449.11 801.48,448.15 802.25,447.19 802.96,446.30 803.56,445.54 804.00,445.00 806.09,477.00 806.51,477.00 807.13,477.00 807.82,477.00 808.46,477.00 809.04,477.00 809.62,477.00 810.19,477.00 810.76,477.00 811.32,477.00 811.88,461.72 812.44,445.62 812.99,436.65 813.54,438.59 814.08,447.43 814.62,457.70 815.16,463.89 815.69,463.92 816.22,460.94 816.74,457.27 817.27,455.24 817.78,456.19 818.30,458.63 818.81,460.70 819.31,460.54 819.82,456.67 820.32,450.40 820.81,444.09 821.31,440.06 821.80,439.07 822.29,439.83 822.77,441.61 823.25,443.70 823.73,446.73 824.20,450.81 824.67,454.43 825.14,456.09 825.61,454.47 826.07,450.68 826.53,446.86 826.99,445.14 827.44,447.31 827.90,451.83 828.35,455.83 828.79,456.48 829.24,451.60 829.68,443.17 830.12,434.62 830.55,429.34 830.98,428.06 831.42,429.04 831.84,431.95 832.27,436.45 832.69,444.33 833.12,455.14 833.53,465.22 833.95,470.90 834.36,469.92 834.78,464.64 835.19,458.43 835.59,454.63 836.00,454.08 836.40,455.01 836.80,456.86 837.20,459.09 837.60,462.64 837.99,467.42 838.39,471.41 838.78,472.56 839.16,469.65 839.55,464.00 839.94,457.37 840.32,451.51 840.70,445.37 841.08,438.51 841.45,433.65 841.83,433.51 842.20,441.30 842.57,454.74 842.94,468.31 843.31,476.51 843.67,476.68 844.04,472.16 844.40,466.42 844.76,462.94 845.12,462.87 845.48,464.27 845.83,466.02 846.19,467.00 846.54,466.12 846.89,464.26 847.24,463.18 847.58,464.69 847.93,471.52 848.27,477.00 848.61,477.00 848.95,477.00 849.29,477.00 849.63,473.19 849.97,459.15 850.30,451.38 850.64,453.54 850.97,461.53 851.30,470.16 851.63,474.21 851.95,470.98 852.28,463.69 852.60,456.00 852.93,451.58 853.25,451.92 853.57,454.90 853.89,458.75 854.20,461.70 854.52,463.88 854.84,466.04 855.15,467.33 855.46,466.87 855.77,463.89 856.08,459.02 856.39,453.57 856.70,448.86 857.00,444.42 857.31,439.82 857.61,436.44 857.91,435.64 858.21,438.61 858.51,444.34 858.81,450.93 859.11,456.47 859.40,461.00 859.70,465.37 859.99,468.83 860.29,470.65 860.58,470.17 860.87,467.93 861.16,465.01 861.45,462.50 861.73,460.17 862.02,457.62 862.30,455.64 862.59,455.05 862.87,457.20 863.15,461.27 863.43,464.85 863.71,465.47 863.99,461.41 864.27,454.32 864.54,446.90 864.82,441.83 865.09,439.95 865.37,439.78 865.64,440.57 865.91,441.60 866.18,442.38 866.45,443.40 866.72,445.36 866.99,448.97 867.25,456.43 867.52,466.70 867.78,475.60 868.05,477.00 868.31,473.76 868.57,462.89 868.83,450.92 869.09,442.45 869.35,438.90 869.61,437.74 869.87,437.68 870.12,437.44 870.38,436.98 870.63,436.90 870.89,436.79 871.14,436.25 871.39,434.58 871.65,432.20 871.90,430.35 872.15,430.31 872.39,432.83 872.64,437.10 872.89,442.01 873.14,446.46 873.38,450.14 873.63,453.66 873.87,457.24 874.11,461.11 874.36,466.53 874.60,472.98 874.84,477.00 875.08,477.00 875.32,474.33 875.56,465.16 875.79,455.47 876.03,449.04 876.27,447.38 876.50,448.31 876.74,450.06 876.97,450.86 877.20,450.18 877.44,448.97 877.67,447.73 877.90,446.94 878.13,446.18 878.36,445.38 878.59,445.55 878.82,447.70 879.04,453.63 879.27,462.28 879.50,470.44 879.72,474.86 879.95,474.01 880.17,469.83 880.40,464.36 880.62,459.62 880.84,455.86 881.06,452.08 881.28,448.50 881.50,445.34 881.72,441.64 881.94,437.62 882.16,435.26 882.38,436.53 882.60,443.94 882.81,455.76 883.03,467.67 883.24,475.32 883.46,476.54 883.67,473.97 883.88,470.54 884.10,469.12 884.31,471.69 884.52,476.30 884.73,477.00 884.94,477.00 885.15,472.96 885.36,461.71 885.57,450.60 885.78,444.17 885.99,443.92 886.19,447.33 886.40,452.93 886.60,459.25 886.81,468.05 887.01,477.00 887.22,477.00 887.42,477.00 887.62,477.00 887.83,477.00 888.03,466.79 888.23,461.78 888.43,467.38 888.63,477.00 888.83,477.00 889.03,477.00 889.23,477.00 889.43,465.83 889.62,448.12 889.82,440.20 890.02,448.83 890.21,467.71 890.41,477.00 890.60,477.00 890.80,477.00 890.99,465.04 891.19,444.25 891.38,431.78 891.57,432.22 891.76,439.89 891.95,448.71 892.15,452.61 892.34,447.71 892.53,438.01 892.72,429.22 892.90,427.10 893.09,435.77 893.28,451.33 893.47,467.36 893.66,477.00 893.84,477.00 894.03,473.92 894.21,468.75 894.40,467.40 894.58,472.53 894.77,477.00 894.95,477.00 895.14,477.00 895.32,477.00 895.50,477.00 895.68,477.00 895.87,476.95 896.05,477.00 896.23,477.00 896.41,477.00 896.59,477.00 896.77,477.00 896.95,475.21 897.13,463.68 897.30,458.55 897.48,463.80 897.66,475.52 897.84,477.00 898.01,477.00 898.19,477.00 898.36,477.00 898.54,477.00 898.71,471.84 898.89,464.58 899.06,456.22 899.24,449.97 899.41,449.04 899.58,457.62 899.76,472.91 899.93,477.00 900.10,477.00 900.27,477.00 900.44,475.72 900.61,461.06 900.78,450.49 900.95,445.75 901.12,443.68 901.29,442.74 901.46,441.35 901.63,438.61 901.79,435.51 901.96,433.35 902.13,433.46 902.30,437.55 902.46,444.45 902.63,451.19 902.79,454.78 902.96,452.35 903.12,446.20 903.29,441.02 903.45,441.54 903.62,451.30 903.78,467.02 903.94,477.00 904.11,477.00 904.28,477.00 904.47,477.00 904.64,477.00 904.75,477.00 905.00,447.69 905.56,477.00" fill="none" stroke="#d84c58" stroke-width="1.2" stroke-linejoin="round" stroke-opacity="0.85"/><polyline points="904.11,477.00 904.28,477.00 904.47,477.00 904.64,477.00 904.75,477.00 905.00,447.69 905.56,477.00 906.12,445.84 906.68,452.05 907.24,477.00 907.80,446.34 908.36,477.00 908.92,454.47 909.48,454.22 910.04,450.49 910.60,453.27 911.16,450.66 911.72,477.00 912.28,448.12 912.84,473.98 913.40,448.29 913.96,472.92 914.52,449.50 915.08,477.00 915.64,445.29 916.20,477.00 916.76,447.81 917.32,477.00 917.88,442.62 918.44,477.00 919.00,447.41 919.56,473.05 920.12,443.17 920.68,473.61 921.24,450.22 921.80,477.00 922.36,457.45 922.92,449.13 923.48,473.07 924.04,447.28 924.60,448.88 925.16,477.00 925.72,439.82 926.28,477.00 926.84,444.73 927.40,477.00 927.96,444.06 928.52,477.00 929.08,443.78 929.64,477.00 930.20,445.29 930.76,477.00 931.32,454.04 931.88,460.39 932.44,440.77 933.00,454.72 933.56,440.72 934.12,468.11 934.68,446.71 935.24,477.00 935.80,443.47 936.36,477.00 936.92,445.40 937.48,446.17 938.04,452.04 938.60,469.92 939.16,437.31 939.72,467.09 940.28,442.73 940.84,468.72 941.40,442.78 941.96,454.20 942.52,435.20 943.08,469.86 943.64,442.97 944.20,449.29 944.76,429.32 945.32,445.58 945.88,443.32 946.44,440.46 947.00,474.20 947.56,438.31 948.12,477.00 948.68,444.01 949.24,460.33 949.80,468.70 950.36,445.54 950.92,477.00 951.48,442.73 952.04,477.00 952.60,447.13 953.16,477.00 953.72,441.97 954.28,473.95 954.84,477.00 955.40,437.16 955.96,477.00 956.52,477.00 957.08,449.44 957.64,447.89 958.20,477.00 958.76,454.59 959.32,475.85 959.88,443.81 960.44,452.32 961.00,477.00 961.56,442.54 962.12,477.00 962.68,441.08 963.24,477.00 963.80,445.06 964.36,477.00 964.92,448.13 965.48,453.13 966.04,442.73 966.60,477.00 967.16,477.00 967.72,474.02 968.28,449.47 968.84,447.21 969.40,447.73 969.96,477.00 970.52,443.43 971.08,472.91 971.64,443.29 972.20,477.00 972.76,439.89 973.32,440.29 973.88,464.28 974.44,447.91 975.00,447.85 975.56,477.00 976.12,453.60 976.68,477.00 977.24,446.08 977.80,455.78 978.36,450.71 978.92,477.00 979.48,440.75 980.04,477.00 980.60,443.12 981.16,477.00 981.72,451.86 982.28,477.00 982.84,439.61 983.40,442.58 983.96,475.53 984.52,443.38 985.08,473.41 985.64,442.77 986.20,475.99 986.76,446.82 987.32,475.11 987.88,446.37 988.44,442.17 989.00,475.71 989.56,445.53 990.12,457.62 990.68,444.34 991.24,471.53 991.53,468.96 991.80,439.91 991.83,383.26 992.13,468.96 992.36,458.04 992.92,444.57 993.48,450.28 994.04,442.72 994.60,477.00 995.16,442.52 995.72,465.93 996.28,431.34 996.84,477.00 997.40,443.51 997.96,477.00 998.52,453.23 999.08,477.00 999.64,447.81 1000.20,446.30 1000.76,442.70 1001.32,477.00 1001.88,459.83 1002.44,443.11 1003.00,453.65 1003.56,445.04 1004.12,442.66 1004.68,474.58 1005.24,444.00 1005.80,477.00 1006.36,452.53 1006.92,444.40 1007.48,471.50 1008.04,446.44 1008.60,477.00 1009.16,444.38 1009.72,474.80 1010.28,442.13 1010.84,477.00 1011.40,477.00 1011.96,447.56 1012.52,445.18 1013.08,477.00 1013.64,446.82 1014.20,458.75 1014.76,450.36 1015.32,474.93 1015.88,446.19 1016.44,477.00 1017.00,438.50 1017.56,477.00 1018.12,441.23 1018.68,477.00 1019.24,438.28 1019.80,477.00 1020.36,428.78 1020.92,459.13 1021.48,441.05 1021.85,468.96 1022.04,477.00 1022.15,380.74 1022.45,468.96 1022.60,442.08 1023.16,450.01 1023.72,477.00 1024.28,446.66 1024.84,452.64 1025.40,439.56 1025.96,477.00 1026.52,432.05 1027.08,463.93 1027.64,443.69 1028.20,477.00 1028.76,442.97 1029.32,475.63 1029.88,444.39 1030.44,468.98 1031.00,439.46 1031.56,477.00 1032.12,447.54 1032.68,477.00 1033.24,461.81 1033.80,444.94 1034.36,447.41 1034.92,451.43 1035.48,449.28 1036.04,477.00 1036.60,441.53 1037.16,477.00 1037.72,447.01 1038.28,455.80 1038.84,440.35 1039.40,457.43 1039.96,444.49 1040.52,455.08 1041.08,439.55 1041.64,447.05 1042.20,455.85 1042.76,437.46 1043.32,477.00 1043.88,441.51 1044.44,464.35 1045.00,443.18 1045.56,477.00 1046.12,443.40 1046.68,475.56 1047.24,435.52 1047.80,477.00 1048.36,440.82 1048.92,476.34 1049.48,442.39 1050.04,477.00 1050.60,432.98 1051.16,477.00 1051.72,446.49 1052.28,473.87 1052.84,441.61 1053.40,472.78 1053.96,439.22 1054.52,477.00 1055.08,434.25 1055.64,462.54 1056.20,443.82 1056.76,477.00 1057.32,443.18 1057.88,477.00 1058.44,444.23 1059.00,477.00 1059.56,445.48 1060.05,468.96 1060.12,477.00 1060.35,398.38 1060.65,468.96 1060.68,439.22 1061.24,474.22 1061.80,446.14 1062.36,445.60 1062.92,477.00 1063.48,442.86 1064.04,477.00 1064.60,477.00 1065.16,448.00 1065.72,477.00 1066.28,437.04 1066.84,456.55 1067.40,448.07 1067.96,456.59 1068.52,445.83 1069.08,454.04 1069.64,437.34 1070.20,476.55 1070.76,452.76 1071.32,460.87 1071.88,445.85 1072.44,477.00 1073.00,445.19 1073.56,456.58 1074.12,441.12 1074.68,477.00 1075.24,450.66 1075.80,477.00 1076.36,448.44 1076.92,459.40 1077.48,448.76 1078.04,465.23 1078.60,443.54 1079.16,461.71 1079.72,447.33 1080.28,477.00 1080.84,440.62 1081.40,477.00 1081.96,438.75 1082.52,477.00 1083.08,441.69 1083.64,477.00 1084.20,439.96 1084.76,474.32 1085.32,443.65 1085.88,476.10 1086.44,443.58 1087.00,472.74 1087.56,440.95 1088.12,477.00 1088.68,445.09 1089.24,461.49 1089.80,442.25 1090.36,426.44 1090.92,477.00 1091.48,440.80 1092.04,477.00 1092.60,437.93 1093.16,474.50 1093.72,435.43 1094.28,443.58 1094.84,477.00 1095.40,450.32 1095.96,477.00 1096.52,445.39 1097.08,471.51 1097.64,438.57 1098.20,447.53 1098.76,477.00 1099.32,422.96 1099.88,477.00 1100.44,440.65 1101.00,477.00 1101.56,439.02 1102.12,459.23 1102.68,436.96 1103.24,477.00 1103.80,445.25 1104.36,461.30 1104.92,443.99 1105.48,474.30 1106.04,445.69 1106.60,477.00 1107.16,441.44 1107.72,444.12 1108.28,477.00 1108.84,441.12 1109.40,441.99 1109.96,474.05 1110.52,441.98 1111.08,477.00 1111.64,477.00 1112.20,444.43 1112.76,473.74 1113.32,441.38 1113.88,446.67 1114.44,438.67 1115.00,477.00 1115.56,446.93 1116.12,477.00 1116.68,441.14 1117.24,456.20 1117.80,442.86 1118.36,450.53 1118.92,438.88 1119.48,430.63 1120.04,445.20 1120.60,477.00 1121.16,446.15 1121.72,452.95 1122.28,439.37 1122.84,477.00 1123.40,450.32 1123.96,477.00 1124.52,444.99 1125.08,474.74 1125.64,444.36 1126.20,477.00 1126.76,453.29 1127.32,477.00 1127.88,446.64 1128.44,455.21 1129.00,436.50 1129.56,463.24 1130.12,443.72 1130.68,477.00 1131.24,477.00 1131.80,448.47 1132.36,462.13 1132.92,435.34 1133.48,442.34 1134.04,477.00 1134.60,443.35 1135.16,440.80 1135.72,441.83 1136.28,477.00 1136.84,444.59 1137.40,459.82 1137.96,437.27 1138.52,463.20 1139.08,444.05 1139.64,475.74 1140.20,446.98 1140.76,460.93 1141.32,444.26 1141.88,449.08 1142.44,473.74 1143.00,447.23 1143.56,443.67 1144.12,477.00 1144.68,441.51 1145.24,477.00 1145.80,443.26 1146.36,476.58 1146.92,443.20 1147.48,477.00 1148.04,450.23 1148.60,475.20 1149.16,443.87 1149.72,477.00 1150.28,439.82 1150.84,462.68 1151.40,445.89 1151.96,477.00 1152.52,442.67 1153.08,464.86 1153.64,444.97 1154.20,454.55 1154.76,442.74 1155.32,443.23 1155.88,455.51 1156.44,440.05 1157.00,464.47 1157.56,445.31 1158.12,474.17 1158.68,436.32 1159.24,477.00 1159.80,443.71 1160.36,444.78 1160.92,477.00 1161.48,440.82 1162.04,477.00 1162.60,441.76 1163.16,474.32 1163.72,443.99 1164.28,476.16 1164.84,453.48" fill="none" stroke="#b42e3c" stroke-width="1.15" stroke-linejoin="miter" stroke-opacity="0.9"/><path d="M938.81 474.0 L939.41 423.5882352941176 L939.71 70.70588235294117 L940.81 70.70588235294117 L941.41 423.5882352941176 L942.21 474.0" fill="none" stroke="#9a3040" stroke-width="1.4"/></g><rect x="647.5" y="45.5" width="516.5" height="428.5" fill="none" stroke="#6a6a6a" stroke-width="1.3"/></svg>
<div style="position:absolute;left:299.6px;top:33.2px;font-family:'Liberation Serif', serif;font-size:10.5px;line-height:1;color:#222;font-weight:bold;white-space:nowrap;letter-spacing:0.9px;">Scope</div>
<div style="position:absolute;left:895.8px;top:33.2px;font-family:'Liberation Serif', serif;font-size:10.5px;line-height:1;color:#222;font-weight:bold;white-space:nowrap;letter-spacing:0.2px;">FFT</div>
<div style="position:absolute;right:1140.5px;top:48.71500000000001px;font-family:'Liberation Sans', sans-serif;font-size:11.3px;line-height:1;color:#2a2a2a;font-weight:normal;white-space:nowrap;text-align:right;letter-spacing:0.2px;">4.5</div>
<div style="position:absolute;right:1140.5px;top:71.47999999999999px;font-family:'Liberation Sans', sans-serif;font-size:11.3px;line-height:1;color:#2a2a2a;font-weight:normal;white-space:nowrap;text-align:right;letter-spacing:0.2px;">4.0</div>
<div style="position:absolute;right:1140.5px;top:94.24499999999998px;font-family:'Liberation Sans', sans-serif;font-size:11.3px;line-height:1;color:#2a2a2a;font-weight:normal;white-space:nowrap;text-align:right;letter-spacing:0.2px;">3.5</div>
<div style="position:absolute;right:1140.5px;top:117.00999999999999px;font-family:'Liberation Sans', sans-serif;font-size:11.3px;line-height:1;color:#2a2a2a;font-weight:normal;white-space:nowrap;text-align:right;letter-spacing:0.2px;">3.0</div>
<div style="position:absolute;right:1140.5px;top:139.775px;font-family:'Liberation Sans', sans-serif;font-size:11.3px;line-height:1;color:#2a2a2a;font-weight:normal;white-space:nowrap;text-align:right;letter-spacing:0.2px;">2.5</div>
<div style="position:absolute;right:1140.5px;top:162.54px;font-family:'Liberation Sans', sans-serif;font-size:11.3px;line-height:1;color:#2a2a2a;font-weight:normal;white-space:nowrap;text-align:right;letter-spacing:0.2px;">2.0</div>
<div style="position:absolute;right:1140.5px;top:185.30499999999998px;font-family:'Liberation Sans', sans-serif;font-size:11.3px;line-height:1;color:#2a2a2a;font-weight:normal;white-space:nowrap;text-align:right;letter-spacing:0.2px;">1.5</div>
<div style="position:absolute;right:1140.5px;top:208.07px;font-family:'Liberation Sans', sans-serif;font-size:11.3px;line-height:1;color:#2a2a2a;font-weight:normal;white-space:nowrap;text-align:right;letter-spacing:0.2px;">1.0</div>
<div style="position:absolute;right:1140.5px;top:230.835px;font-family:'Liberation Sans', sans-serif;font-size:11.3px;line-height:1;color:#2a2a2a;font-weight:normal;white-space:nowrap;text-align:right;letter-spacing:0.2px;">500m</div>
<div style="position:absolute;right:1140.5px;top:253.6px;font-family:'Liberation Sans', sans-serif;font-size:11.3px;line-height:1;color:#2a2a2a;font-weight:normal;white-space:nowrap;text-align:right;letter-spacing:0.2px;">0</div>
<div style="position:absolute;right:1140.5px;top:276.365px;font-family:'Liberation Sans', sans-serif;font-size:11.3px;line-height:1;color:#2a2a2a;font-weight:normal;white-space:nowrap;text-align:right;letter-spacing:0.2px;">-500m</div>
<div style="position:absolute;right:1140.5px;top:299.13px;font-family:'Liberation Sans', sans-serif;font-size:11.3px;line-height:1;color:#2a2a2a;font-weight:normal;white-space:nowrap;text-align:right;letter-spacing:0.2px;">-1.0</div>
<div style="position:absolute;right:1140.5px;top:321.89500000000004px;font-family:'Liberation Sans', sans-serif;font-size:11.3px;line-height:1;color:#2a2a2a;font-weight:normal;white-space:nowrap;text-align:right;letter-spacing:0.2px;">-1.5</div>
<div style="position:absolute;right:1140.5px;top:344.66px;font-family:'Liberation Sans', sans-serif;font-size:11.3px;line-height:1;color:#2a2a2a;font-weight:normal;white-space:nowrap;text-align:right;letter-spacing:0.2px;">-2.0</div>
<div style="position:absolute;right:1140.5px;top:367.425px;font-family:'Liberation Sans', sans-serif;font-size:11.3px;line-height:1;color:#2a2a2a;font-weight:normal;white-space:nowrap;text-align:right;letter-spacing:0.2px;">-2.5</div>
<div style="position:absolute;right:1140.5px;top:390.19000000000005px;font-family:'Liberation Sans', sans-serif;font-size:11.3px;line-height:1;color:#2a2a2a;font-weight:normal;white-space:nowrap;text-align:right;letter-spacing:0.2px;">-3.0</div>
<div style="position:absolute;right:1140.5px;top:412.95500000000004px;font-family:'Liberation Sans', sans-serif;font-size:11.3px;line-height:1;color:#2a2a2a;font-weight:normal;white-space:nowrap;text-align:right;letter-spacing:0.2px;">-3.5</div>
<div style="position:absolute;right:1140.5px;top:435.72px;font-family:'Liberation Sans', sans-serif;font-size:11.3px;line-height:1;color:#2a2a2a;font-weight:normal;white-space:nowrap;text-align:right;letter-spacing:0.2px;">-4.0</div>
<div style="position:absolute;right:1140.5px;top:458.485px;font-family:'Liberation Sans', sans-serif;font-size:11.3px;line-height:1;color:#2a2a2a;font-weight:normal;white-space:nowrap;text-align:right;letter-spacing:0.2px;">-4.5</div>
<div style="position:absolute;left:-136.6px;width:400px;top:478px;font-family:'Liberation Sans', sans-serif;font-size:12px;line-height:1;color:#333;font-weight:normal;white-space:nowrap;text-align:center;">0</div>
<div style="position:absolute;left:-69.19999999999999px;width:400px;top:478px;font-family:'Liberation Sans', sans-serif;font-size:12px;line-height:1;color:#333;font-weight:normal;white-space:nowrap;text-align:center;">400u</div>
<div style="position:absolute;left:-1.799999999999983px;width:400px;top:478px;font-family:'Liberation Sans', sans-serif;font-size:12px;line-height:1;color:#333;font-weight:normal;white-space:nowrap;text-align:center;">800u</div>
<div style="position:absolute;left:65.60000000000002px;width:400px;top:478px;font-family:'Liberation Sans', sans-serif;font-size:12px;line-height:1;color:#333;font-weight:normal;white-space:nowrap;text-align:center;">1.2m</div>
<div style="position:absolute;left:133.0px;width:400px;top:478px;font-family:'Liberation Sans', sans-serif;font-size:12px;line-height:1;color:#333;font-weight:normal;white-space:nowrap;text-align:center;">1.6m</div>
<div style="position:absolute;left:200.39999999999998px;width:400px;top:478px;font-family:'Liberation Sans', sans-serif;font-size:12px;line-height:1;color:#333;font-weight:normal;white-space:nowrap;text-align:center;">2.0m</div>
<div style="position:absolute;left:267.8px;width:400px;top:478px;font-family:'Liberation Sans', sans-serif;font-size:12px;line-height:1;color:#333;font-weight:normal;white-space:nowrap;text-align:center;">2.4m</div>
<div style="position:absolute;left:335.20000000000005px;width:400px;top:478px;font-family:'Liberation Sans', sans-serif;font-size:12px;line-height:1;color:#333;font-weight:normal;white-space:nowrap;text-align:center;">2.8m</div>
<div style="position:absolute;left:115px;width:400px;top:489px;font-family:'Liberation Sans', sans-serif;font-size:12px;line-height:1;color:#333;font-weight:normal;white-space:nowrap;text-align:center;">Time (s)</div>
<div style="position:absolute;left:-85px;top:252px;width:200px;text-align:center;font-family:'Liberation Sans', sans-serif;font-size:11.5px;line-height:14px;color:#333;transform:rotate(-90deg);white-space:nowrap;">Instantaneous Level (V)</div>
<div style="position:absolute;right:556px;top:39.1px;font-family:'Liberation Sans', sans-serif;font-size:11.3px;line-height:1;color:#2a2a2a;font-weight:normal;white-space:nowrap;text-align:right;letter-spacing:0.2px;">+10</div>
<div style="position:absolute;right:556px;top:64.30588235294117px;font-family:'Liberation Sans', sans-serif;font-size:11.3px;line-height:1;color:#2a2a2a;font-weight:normal;white-space:nowrap;text-align:right;letter-spacing:0.2px;">0</div>
<div style="position:absolute;right:556px;top:89.51176470588234px;font-family:'Liberation Sans', sans-serif;font-size:11.3px;line-height:1;color:#2a2a2a;font-weight:normal;white-space:nowrap;text-align:right;letter-spacing:0.2px;">-10</div>
<div style="position:absolute;right:556px;top:114.71764705882353px;font-family:'Liberation Sans', sans-serif;font-size:11.3px;line-height:1;color:#2a2a2a;font-weight:normal;white-space:nowrap;text-align:right;letter-spacing:0.2px;">-20</div>
<div style="position:absolute;right:556px;top:139.9235294117647px;font-family:'Liberation Sans', sans-serif;font-size:11.3px;line-height:1;color:#2a2a2a;font-weight:normal;white-space:nowrap;text-align:right;letter-spacing:0.2px;">-30</div>
<div style="position:absolute;right:556px;top:165.12941176470588px;font-family:'Liberation Sans', sans-serif;font-size:11.3px;line-height:1;color:#2a2a2a;font-weight:normal;white-space:nowrap;text-align:right;letter-spacing:0.2px;">-40</div>
<div style="position:absolute;right:556px;top:190.33529411764707px;font-family:'Liberation Sans', sans-serif;font-size:11.3px;line-height:1;color:#2a2a2a;font-weight:normal;white-space:nowrap;text-align:right;letter-spacing:0.2px;">-50</div>
<div style="position:absolute;right:556px;top:215.54117647058823px;font-family:'Liberation Sans', sans-serif;font-size:11.3px;line-height:1;color:#2a2a2a;font-weight:normal;white-space:nowrap;text-align:right;letter-spacing:0.2px;">-60</div>
<div style="position:absolute;right:556px;top:240.74705882352941px;font-family:'Liberation Sans', sans-serif;font-size:11.3px;line-height:1;color:#2a2a2a;font-weight:normal;white-space:nowrap;text-align:right;letter-spacing:0.2px;">-70</div>
<div style="position:absolute;right:556px;top:265.95294117647063px;font-family:'Liberation Sans', sans-serif;font-size:11.3px;line-height:1;color:#2a2a2a;font-weight:normal;white-space:nowrap;text-align:right;letter-spacing:0.2px;">-80</div>
<div style="position:absolute;right:556px;top:291.1588235294118px;font-family:'Liberation Sans', sans-serif;font-size:11.3px;line-height:1;color:#2a2a2a;font-weight:normal;white-space:nowrap;text-align:right;letter-spacing:0.2px;">-90</div>
<div style="position:absolute;right:556px;top:316.36470588235295px;font-family:'Liberation Sans', sans-serif;font-size:11.3px;line-height:1;color:#2a2a2a;font-weight:normal;white-space:nowrap;text-align:right;letter-spacing:0.2px;">-100</div>
<div style="position:absolute;right:556px;top:341.57058823529417px;font-family:'Liberation Sans', sans-serif;font-size:11.3px;line-height:1;color:#2a2a2a;font-weight:normal;white-space:nowrap;text-align:right;letter-spacing:0.2px;">-110</div>
<div style="position:absolute;right:556px;top:366.7764705882353px;font-family:'Liberation Sans', sans-serif;font-size:11.3px;line-height:1;color:#2a2a2a;font-weight:normal;white-space:nowrap;text-align:right;letter-spacing:0.2px;">-120</div>
<div style="position:absolute;right:556px;top:391.9823529411765px;font-family:'Liberation Sans', sans-serif;font-size:11.3px;line-height:1;color:#2a2a2a;font-weight:normal;white-space:nowrap;text-align:right;letter-spacing:0.2px;">-130</div>
<div style="position:absolute;right:556px;top:417.18823529411765px;font-family:'Liberation Sans', sans-serif;font-size:11.3px;line-height:1;color:#2a2a2a;font-weight:normal;white-space:nowrap;text-align:right;letter-spacing:0.2px;">-140</div>
<div style="position:absolute;right:556px;top:442.39411764705886px;font-family:'Liberation Sans', sans-serif;font-size:11.3px;line-height:1;color:#2a2a2a;font-weight:normal;white-space:nowrap;text-align:right;letter-spacing:0.2px;">-150</div>
<div style="position:absolute;right:556px;top:467.6px;font-family:'Liberation Sans', sans-serif;font-size:11.3px;line-height:1;color:#2a2a2a;font-weight:normal;white-space:nowrap;text-align:right;letter-spacing:0.2px;">-160</div>
<div style="position:absolute;left:447.5px;width:400px;top:478px;font-family:'Liberation Sans', sans-serif;font-size:12px;line-height:1;color:#333;font-weight:normal;white-space:nowrap;text-align:center;">20</div>
<div style="position:absolute;left:477.81704510075315px;width:400px;top:478px;font-family:'Liberation Sans', sans-serif;font-size:12px;line-height:1;color:#333;font-weight:normal;white-space:nowrap;text-align:center;">30</div>
<div style="position:absolute;left:516.0120048263691px;width:400px;top:478px;font-family:'Liberation Sans', sans-serif;font-size:12px;line-height:1;color:#333;font-weight:normal;white-space:nowrap;text-align:center;">50</div>
<div style="position:absolute;left:567.8393357465179px;width:400px;top:478px;font-family:'Liberation Sans', sans-serif;font-size:12px;line-height:1;color:#333;font-weight:normal;white-space:nowrap;text-align:center;">100</div>
<div style="position:absolute;left:619.6666666666666px;width:400px;top:478px;font-family:'Liberation Sans', sans-serif;font-size:12px;line-height:1;color:#333;font-weight:normal;white-space:nowrap;text-align:center;">200</div>
<div style="position:absolute;left:649.9837117674198px;width:400px;top:478px;font-family:'Liberation Sans', sans-serif;font-size:12px;line-height:1;color:#333;font-weight:normal;white-space:nowrap;text-align:center;">300</div>
<div style="position:absolute;left:688.1786714930358px;width:400px;top:478px;font-family:'Liberation Sans', sans-serif;font-size:12px;line-height:1;color:#333;font-weight:normal;white-space:nowrap;text-align:center;">500</div>
<div style="position:absolute;left:740.0060024131845px;width:400px;top:478px;font-family:'Liberation Sans', sans-serif;font-size:12px;line-height:1;color:#333;font-weight:normal;white-space:nowrap;text-align:center;">1k</div>
<div style="position:absolute;left:791.8333333333333px;width:400px;top:478px;font-family:'Liberation Sans', sans-serif;font-size:12px;line-height:1;color:#333;font-weight:normal;white-space:nowrap;text-align:center;">2k</div>
<div style="position:absolute;left:822.1503784340864px;width:400px;top:478px;font-family:'Liberation Sans', sans-serif;font-size:12px;line-height:1;color:#333;font-weight:normal;white-space:nowrap;text-align:center;">3k</div>
<div style="position:absolute;left:860.3453381597024px;width:400px;top:478px;font-family:'Liberation Sans', sans-serif;font-size:12px;line-height:1;color:#333;font-weight:normal;white-space:nowrap;text-align:center;">5k</div>
<div style="position:absolute;left:912.1726690798512px;width:400px;top:478px;font-family:'Liberation Sans', sans-serif;font-size:12px;line-height:1;color:#333;font-weight:normal;white-space:nowrap;text-align:center;">10k</div>
<div style="position:absolute;left:964.0px;width:400px;top:478px;font-family:'Liberation Sans', sans-serif;font-size:12px;line-height:1;color:#333;font-weight:normal;white-space:nowrap;text-align:center;">20k</div>
<div style="position:absolute;left:705px;width:400px;top:489px;font-family:'Liberation Sans', sans-serif;font-size:12px;line-height:1;color:#333;font-weight:normal;white-space:nowrap;text-align:center;">Frequency (Hz)</div>
<div style="position:absolute;left:511px;top:252px;width:200px;text-align:center;font-family:'Liberation Sans', sans-serif;font-size:11.5px;line-height:14px;color:#333;transform:rotate(-90deg);white-space:nowrap;">Level (dBrA)</div>
</body></html>
